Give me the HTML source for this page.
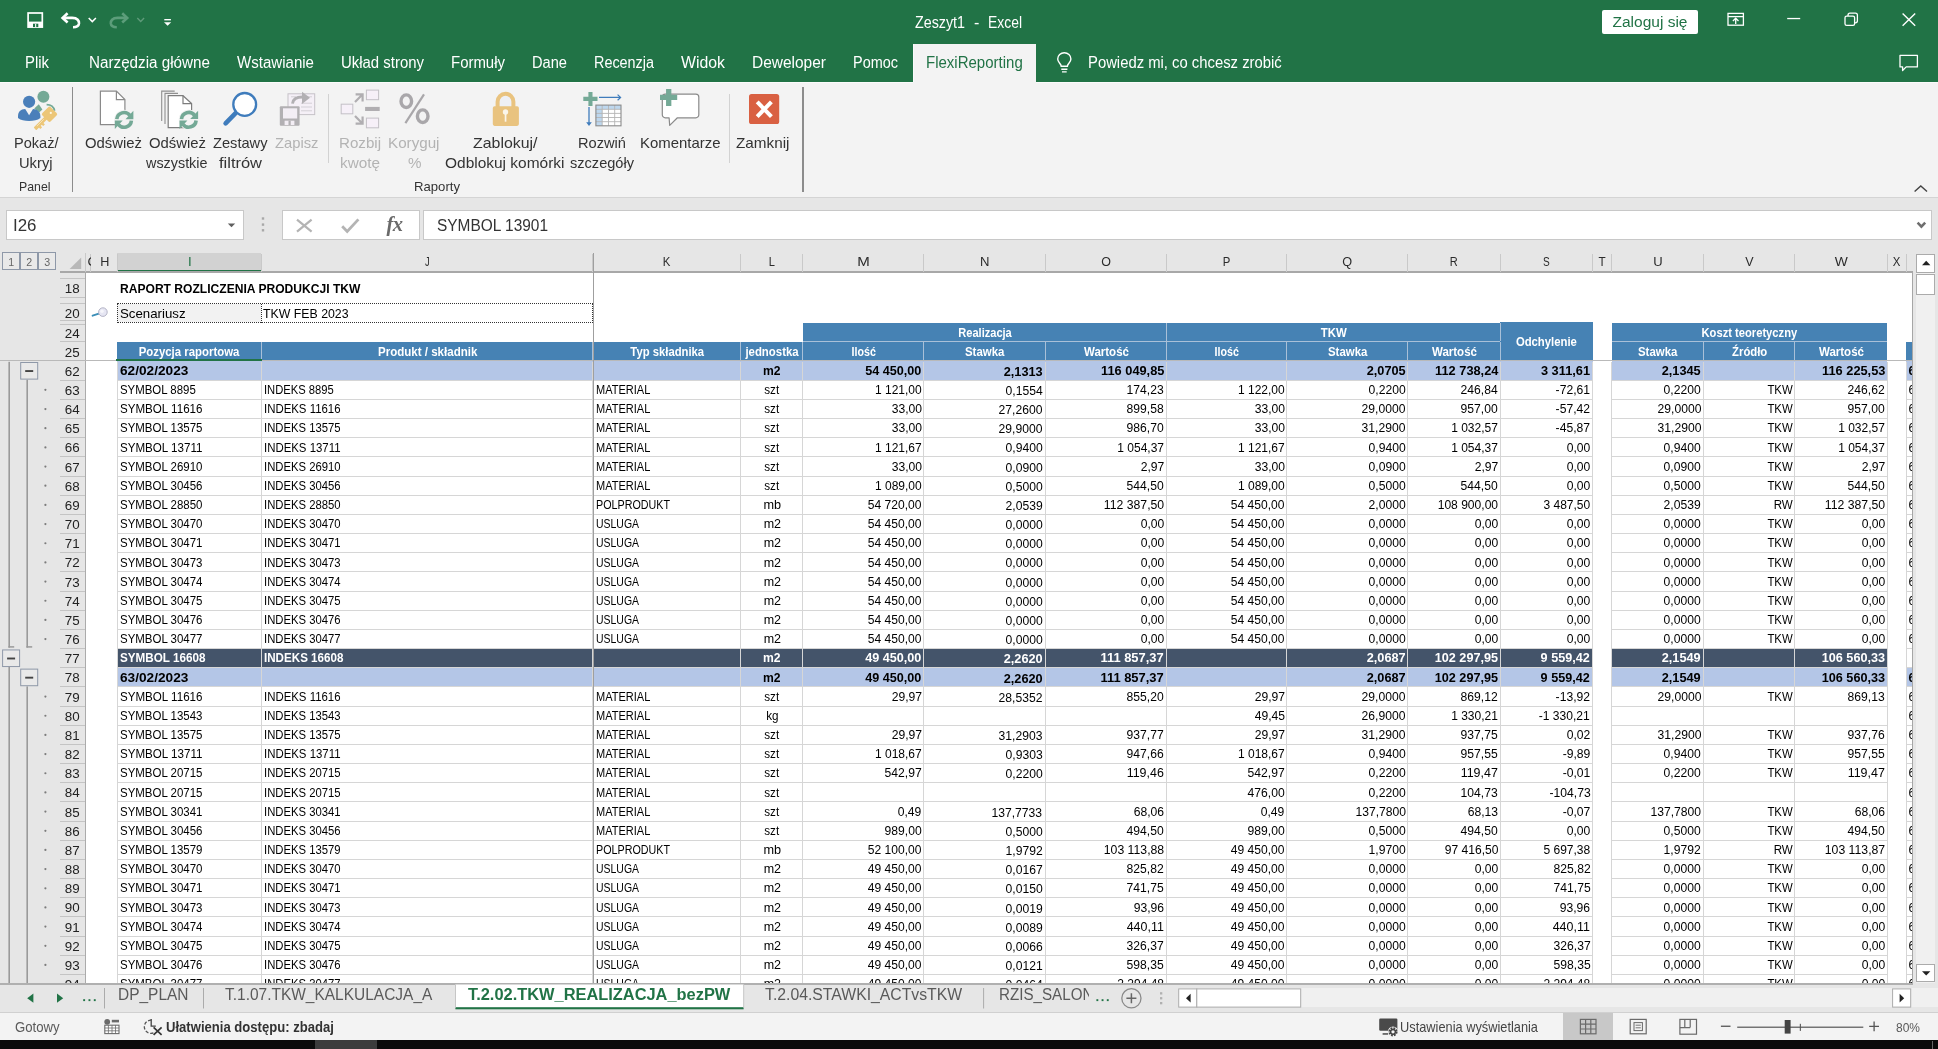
<!DOCTYPE html>
<html><head><meta charset="utf-8"><title>Zeszyt1 - Excel</title><style>
html,body{margin:0;padding:0}
body{width:1938px;height:1049px;position:relative;overflow:hidden;background:#e6e6e6;font-family:"Liberation Sans",sans-serif}
.b{position:absolute;display:block}
.t{position:absolute;white-space:nowrap;line-height:1;display:block}
.clip{position:absolute;overflow:hidden}
#root{position:absolute;left:0;top:0;width:1938px;height:1049px;will-change:transform}
</style></head><body><div id="root">
<div class="b" style="left:0px;top:0px;width:1938px;height:82px;background:#217346;"></div>
<div class="b" style="left:0px;top:82px;width:1938px;height:115px;background:#f3f3f3;"></div>
<div class="b" style="left:0px;top:196.5px;width:1938px;height:1px;background:#d4d4d4;"></div>
<div class="b" style="left:0px;top:197.5px;width:1938px;height:55px;background:#e6e6e6;"></div>
<svg class="b" style="left:0px;top:0px;" width="1938" height="81" viewBox="0 0 1938 81"><rect x="28.100" y="13" width="14.200" height="14.100" fill="none" stroke="#fff" stroke-width="1.700"/><rect x="28.100" y="21.600" width="14.200" height="5.500" fill="#fff"/><rect x="33" y="23.700" width="5.300" height="3.400" fill="#217346"/><rect x="35.100" y="23.900" width="1.100" height="3.200" fill="#fff"/><g fill="none" stroke="#fff" stroke-width="2.600"><path d="M67.600 13.300L62.600 17.900L67.600 22.500"/><path d="M63.200 17.900H72.200C77.600 17.900 79.200 21 79 23.400C78.700 26.200 76 27.300 73 27.300"/></g><path d="M88.700 18l3.600 3.600l3.600-3.600" fill="none" stroke="#fff" stroke-width="1.500"/><g fill="none" stroke="#5c9d7a" stroke-width="2.600"><path d="M122.200 13.300L127.200 17.900L122.200 22.500"/><path d="M126.600 17.900H117.600C112.200 17.900 110.600 21 110.800 23.400C111.100 26.200 113.800 27.300 116.800 27.300"/></g><path d="M137.300 18l3.400 3.400l3.400-3.400" fill="none" stroke="#5f9b7a" stroke-width="1.400"/><rect x="164.3" y="19" width="6.6" height="1.4" fill="#fff"/><path d="M164 22.2h7.2l-3.6 3.6z" fill="#fff"/><g fill="none" stroke="#fff" stroke-width="1.3"><rect x="1728" y="13.4" width="15.4" height="11.8"/><path d="M1728 16.6h15.4"/><path d="M1735.7 24v-5.6M1732.9 21l2.8-2.8l2.8 2.8"/></g><rect x="1787.2" y="17.9" width="13" height="1.3" fill="#fff"/><g fill="none" stroke="#fff" stroke-width="1.3"><rect x="1845" y="16.2" width="9.6" height="9.2" rx="1.6"/><path d="M1848 16v-0.8a2 2 0 0 1 2-2h5.4a2 2 0 0 1 2 2v5.6a2 2 0 0 1-2 2h-0.6"/></g><path d="M1902.6 13.4l12.6 12.4M1915.2 13.4l-12.6 12.4" stroke="#fff" stroke-width="1.4" fill="none"/><path d="M1900 55.3h17.4v11.6h-11.2l-3.6 3.6v-3.6h-2.6z" fill="none" stroke="#fff" stroke-width="1.3" stroke-linejoin="round"/><g fill="none" stroke="#fff" stroke-width="1.4"><path d="M1061.2 66.3c0-2.6-3.5-3.6-3.5-7.2a6.6 6.4 0 0 1 13.2 0c0 3.6-3.5 4.6-3.5 7.2z"/><path d="M1061.3 69.2h6.1M1062 71.9h4.7"/></g></svg>
<span class="t" style="left:915.4px;top:14.75px;font-size:16px;color:#fff;transform:scaleX(0.8926);transform-origin:0 50%;">Zeszyt1</span>
<span class="t" style="left:974px;top:14.75px;font-size:16px;color:#fff;">-</span>
<span class="t" style="left:988.4px;top:14.75px;font-size:16px;color:#fff;transform:scaleX(0.8690);transform-origin:0 50%;">Excel</span>
<div class="b" style="left:1602px;top:10px;width:96px;height:23.5px;background:#fff;border-radius:2px;"></div>
<span class="t" style="left:1612.5px;top:13.88px;font-size:15.5px;color:#217346;">Zaloguj się</span>
<span class="t" style="left:25px;top:54.69px;font-size:15.6px;color:#fff;transform:scaleX(0.9547);transform-origin:0 50%;">Plik</span>
<span class="t" style="left:89px;top:54.69px;font-size:15.6px;color:#fff;transform:scaleX(0.9758);transform-origin:0 50%;">Narzędzia główne</span>
<span class="t" style="left:237px;top:54.69px;font-size:15.6px;color:#fff;transform:scaleX(0.9654);transform-origin:0 50%;">Wstawianie</span>
<span class="t" style="left:341px;top:54.69px;font-size:15.6px;color:#fff;transform:scaleX(0.9573);transform-origin:0 50%;">Układ strony</span>
<span class="t" style="left:451px;top:54.69px;font-size:15.6px;color:#fff;transform:scaleX(0.9585);transform-origin:0 50%;">Formuły</span>
<span class="t" style="left:532px;top:54.69px;font-size:15.6px;color:#fff;transform:scaleX(0.9385);transform-origin:0 50%;">Dane</span>
<span class="t" style="left:594px;top:54.69px;font-size:15.6px;color:#fff;transform:scaleX(0.9225);transform-origin:0 50%;">Recenzja</span>
<span class="t" style="left:681px;top:54.69px;font-size:15.6px;color:#fff;transform:scaleX(1.0152);transform-origin:0 50%;">Widok</span>
<span class="t" style="left:752px;top:54.69px;font-size:15.6px;color:#fff;transform:scaleX(0.9923);transform-origin:0 50%;">Deweloper</span>
<span class="t" style="left:853px;top:54.69px;font-size:15.6px;color:#fff;transform:scaleX(0.9268);transform-origin:0 50%;">Pomoc</span>
<div class="b" style="left:0px;top:81.8px;width:1938px;height:1.1px;background:#fbfbfb;"></div>
<div class="b" style="left:913.4px;top:43.5px;width:122.4px;height:39.5px;background:#f3f3f3;"></div>
<div class="b" style="left:913.4px;top:43.5px;width:1px;height:38.5px;background:#fafafa;"></div>
<span class="t" style="left:925.6px;top:54.69px;font-size:15.6px;color:#217346;transform:scaleX(0.9624);transform-origin:0 50%;">FlexiReporting</span>
<span class="t" style="left:1088.2px;top:54.69px;font-size:15.6px;color:#fff;transform:scaleX(0.9512);transform-origin:0 50%;">Powiedz mi, co chcesz zrobić</span>
<svg class="b" style="left:0px;top:81px;" width="1938" height="116" viewBox="0 81 1938 116"><circle cx="43.4" cy="96.8" r="6" fill="#74a996"/><path d="M34.2 108.6l4.6-4.4 3.6 5.4-3 2.6z" fill="#74a996"/><path d="M46.6 104.6c4 0 7.2 2.4 8 6.2" fill="none" stroke="#74a996" stroke-width="1.8"/><circle cx="29.1" cy="101.8" r="6.1" fill="#4a7fba"/><path d="M18 116.5c0-4.6 2.6-7.4 7.2-7.4l3.9 6.2 3.9-6.2c4.6 0 7.4 2.8 7.4 7.4v1.6c-3 2.2-6.6 3-11.3 3s-8.300-0.800-11.100-3z" fill="#4a7fba"/><g fill="#ecc678" transform="translate(49.500 114.300) rotate(45)"><rect x="-5.900" y="-5.900" width="11.800" height="11.800" rx="1.800"/><rect x="-1.900" y="3" width="3.800" height="17.600" rx="0.800"/><rect x="1.500" y="10.400" width="2.400" height="2.400"/><rect x="1.500" y="14.400" width="2.400" height="2.400"/></g><circle cx="50.800" cy="112.900" r="1.100" fill="#fdf6e3"/><path d="M36.800 126.200l7-7" stroke="#f7e6bd" stroke-width="0.900"/><path d="M100.4 91.100h16l8.500 8.500v25h-24.500z" fill="#fff" stroke="#8a8a8a" stroke-width="1.2"/><path d="M116.400 91.100v8.500h8.500" fill="none" stroke="#8a8a8a" stroke-width="1.2"/><circle cx="124.100" cy="119.900" r="10.200" fill="#f3f3f3"/><g fill="none" stroke="#74a996" stroke-width="3.600"><path d="M116.80 119.20A7.30 7.30 0 0 1 129.85 115.41"/><path d="M131.40 120.60A7.30 7.30 0 0 1 118.35 124.39"/></g><path d="M133.40 110.80V119.20H125.50z" fill="#74a996"/><path d="M114.80 129.00V120.60H122.70z" fill="#74a996"/><path d="M161.700 121v-29.900h13" fill="none" stroke="#8f8f8f" stroke-width="1.1"/><path d="M165 124v-30.600h13" fill="none" stroke="#8f8f8f" stroke-width="1.1"/><path d="M168.200 95.700h14.800l8.600 7.900v24h-23.400z" fill="#fff" stroke="#7d7d7d" stroke-width="1.2"/><path d="M183 95.700v7.900h8.600" fill="none" stroke="#7d7d7d" stroke-width="1.2"/><circle cx="188.800" cy="119.800" r="10.200" fill="#f3f3f3"/><g fill="none" stroke="#74a996" stroke-width="3.600"><path d="M181.50 119.10A7.30 7.30 0 0 1 194.55 115.31"/><path d="M196.10 120.50A7.30 7.30 0 0 1 183.05 124.29"/></g><path d="M198.10 110.70V119.10H190.20z" fill="#74a996"/><path d="M179.50 128.90V120.50H187.40z" fill="#74a996"/><path d="M235.600 113.200L225.600 123.300" stroke="#3f7cbc" stroke-width="4.600" stroke-linecap="round"/><circle cx="244.700" cy="104.400" r="11.400" fill="#fff" stroke="#3f7cbc" stroke-width="2.300"/><rect x="288" y="93.800" width="26.700" height="20.800" fill="#f5f0f7" stroke="#c6c2c8" stroke-width="1"/><path d="M301 103.200h11M301 107h11M301 110.800h11M291 96.800h5M307 96.800h5" stroke="#d0ccd2" stroke-width="0.9"/><path d="M292.500 103.600c0.500-5 4-6.600 10-6.600" fill="none" stroke="#b2b0b3" stroke-width="2.800"/><path d="M302 91.700l8 6.100-8 6.300z" fill="#b2b0b3"/><rect x="279.800" y="106.300" width="19.800" height="19.500" rx="1" fill="#b2b0b3"/><rect x="283" y="108.300" width="14.200" height="10.200" fill="#f3eef5"/><rect x="284.600" y="120.700" width="9.800" height="4.300" fill="#f3eef5"/><rect x="288.500" y="120.700" width="2.200" height="4.300" fill="#b2b0b3"/><rect x="341.200" y="104.200" width="11.600" height="9.600" fill="#f6f0f8" stroke="#c4c0c6" stroke-width="1"/><rect x="366.400" y="90.100" width="12.200" height="9.600" fill="#f6f0f8" stroke="#c4c0c6" stroke-width="1"/><rect x="366.400" y="118.100" width="12.200" height="9.700" fill="#f6f0f8" stroke="#c4c0c6" stroke-width="1"/><rect x="365.100" y="106.900" width="14.600" height="4.100" fill="#b0aeb1"/><g stroke="#b0aeb1" stroke-width="2.200" fill="none"><path d="M355 102l7.200-7.200M355.600 94.400h7v7"/><path d="M355 116l7.200 7.200M355.600 123.600h7v-7"/></g><g fill="none" stroke="#a9a7aa"><ellipse cx="406.300" cy="101.200" rx="5.300" ry="6.300" stroke-width="3.400"/><ellipse cx="422.700" cy="116.200" rx="5.300" ry="6.300" stroke-width="3.400"/><path d="M405.400 123.200l18.600-28.800" stroke-width="2.200"/></g><path d="M497.600 108v-6.300a7.900 7.900 0 0 1 15.800 0v6.300" fill="#eef0f5" stroke="#e9c37f" stroke-width="4"/><rect x="492.800" y="106.200" width="26.100" height="19.700" rx="1.800" fill="#e9c37f"/><circle cx="505.500" cy="112" r="2.700" fill="#fbf6ea"/><rect x="504.700" y="112" width="1.700" height="9.700" fill="#fbf6ea"/><rect x="595.900" y="105.100" width="25.100" height="20.700" fill="#fff"/><rect x="595.900" y="105.100" width="25.100" height="4.200" fill="#bdd7ee"/><rect x="595.900" y="105.100" width="6.300" height="20.700" fill="#bdd7ee"/><path d="M595.900 109.300h25.100M595.900 113.400h25.100M595.900 117.500h25.100M595.900 121.700h25.100M602.200 105.100v20.700M608.500 105.100v20.700M614.700 105.100v20.700" stroke="#b4b4b4" stroke-width="0.9" fill="none"/><rect x="595.900" y="105.100" width="25.100" height="20.700" fill="none" stroke="#8a8a8a" stroke-width="1.100"/><path d="M583.300 98.850h14.200M590.450 92.100v13.900" stroke="#74a996" stroke-width="4.100" fill="none"/><path d="M599 97.400h21M617.600 94.600l3 2.800-3 2.800" stroke="#3f7cbc" stroke-width="1.200" fill="none"/><path d="M589 107.100v16" stroke="#3f7cbc" stroke-width="1.300" fill="none"/><path d="M586.200 122.200h5.600l-2.800 3.800z" fill="#3f7cbc"/><path d="M665.300 94.100h30.500a3 3 0 0 1 3 3v17.700a3 3 0 0 1-3 3h-18.400l-7.700 7.600-0.600-7.600h-3.800a3 3 0 0 1-3-3v-17.700a3 3 0 0 1 3-3z" fill="#fff" stroke="#8a8a8a" stroke-width="1.200" stroke-linejoin="round"/><path d="M660 97.450h17.200M668.700 89v17" stroke="#74a996" stroke-width="5.300" fill="none"/><rect x="749" y="94.100" width="30.200" height="29.900" rx="2.600" fill="#d96042"/><path d="M757.200 101.800l14.200 14.800M771.400 101.800l-14.200 14.800" stroke="#fff" stroke-width="4" fill="none"/><path d="M1914.600 191.600l6.200-5.700 6.200 5.700" fill="none" stroke="#444" stroke-width="1.400"/></svg>
<span class="t" style="left:14px;top:134.9px;font-size:15px;color:#333;transform:scaleX(0.9704);transform-origin:0 50%;">Pokaż/</span>
<span class="t" style="left:19px;top:155.3px;font-size:15px;color:#333;transform:scaleX(0.9806);transform-origin:0 50%;">Ukryj</span>
<span class="t" style="left:84.5px;top:134.9px;font-size:15px;color:#333;transform:scaleX(0.9910);transform-origin:0 50%;">Odśwież</span>
<span class="t" style="left:149px;top:134.9px;font-size:15px;color:#333;transform:scaleX(0.9910);transform-origin:0 50%;">Odśwież</span>
<span class="t" style="left:146px;top:155.3px;font-size:15px;color:#333;transform:scaleX(0.9583);transform-origin:0 50%;">wszystkie</span>
<span class="t" style="left:213px;top:134.9px;font-size:15px;color:#333;transform:scaleX(0.9759);transform-origin:0 50%;">Zestawy</span>
<span class="t" style="left:219px;top:155.3px;font-size:15px;color:#333;transform:scaleX(1.0977);transform-origin:0 50%;">filtrów</span>
<span class="t" style="left:274.5px;top:134.9px;font-size:15px;color:#b3b3b3;transform:scaleX(0.9846);transform-origin:0 50%;">Zapisz</span>
<span class="t" style="left:339px;top:134.9px;font-size:15px;color:#b3b3b3;transform:scaleX(1.0076);transform-origin:0 50%;">Rozbij</span>
<span class="t" style="left:340px;top:155.3px;font-size:15px;color:#b3b3b3;transform:scaleX(1.0208);transform-origin:0 50%;">kwotę</span>
<span class="t" style="left:388px;top:134.9px;font-size:15px;color:#b3b3b3;transform:scaleX(1.0125);transform-origin:0 50%;">Koryguj</span>
<span class="t" style="left:407.5px;top:155.3px;font-size:15px;color:#b3b3b3;transform:scaleX(1.0122);transform-origin:0 50%;">%</span>
<span class="t" style="left:473px;top:134.9px;font-size:15px;color:#333;transform:scaleX(1.0597);transform-origin:0 50%;">Zablokuj/</span>
<span class="t" style="left:444.5px;top:155.3px;font-size:15px;color:#333;transform:scaleX(1.0312);transform-origin:0 50%;">Odblokuj komórki</span>
<span class="t" style="left:578px;top:134.9px;font-size:15px;color:#333;transform:scaleX(0.9759);transform-origin:0 50%;">Rozwiń</span>
<span class="t" style="left:570px;top:155.3px;font-size:15px;color:#333;transform:scaleX(0.9718);transform-origin:0 50%;">szczegóły</span>
<span class="t" style="left:639.5px;top:134.9px;font-size:15px;color:#333;transform:scaleX(0.9953);transform-origin:0 50%;">Komentarze</span>
<span class="t" style="left:736px;top:134.9px;font-size:15px;color:#333;transform:scaleX(1.0189);transform-origin:0 50%;">Zamknij</span>
<span class="t" style="left:19px;top:180.07px;font-size:13.5px;color:#333;transform:scaleX(0.9123);transform-origin:0 50%;">Panel</span>
<span class="t" style="left:413.5px;top:180.07px;font-size:13.5px;color:#333;transform:scaleX(0.9731);transform-origin:0 50%;">Raporty</span>
<div class="b" style="left:71.6px;top:87px;width:1.5px;height:104.5px;background:#8c8c8c;"></div>
<div class="b" style="left:802.3px;top:87px;width:1.5px;height:104.5px;background:#8c8c8c;"></div>
<div class="b" style="left:327.9px;top:94px;width:1px;height:69px;background:#d2d2d2;"></div>
<div class="b" style="left:728.8px;top:94px;width:1px;height:69px;background:#d2d2d2;"></div>
<div class="b" style="left:6px;top:210px;width:237.8px;height:30px;background:#fff;border:1px solid #c8c8c8;box-sizing:border-box;"></div>
<span class="t" style="left:13px;top:218.05px;font-size:16px;color:#333;transform:scaleX(1.0565);transform-origin:0 50%;">I26</span>
<div class="b" style="left:281.5px;top:210px;width:138.5px;height:30px;background:#fff;border:1px solid #c8c8c8;box-sizing:border-box;"></div>
<div class="b" style="left:423px;top:210px;width:1509px;height:30px;background:#fff;border:1px solid #c8c8c8;box-sizing:border-box;"></div>
<span class="t" style="left:437.2px;top:218.05px;font-size:16px;color:#333;transform:scaleX(0.9649);transform-origin:0 50%;">SYMBOL 13901</span>
<svg class="b" style="left:0px;top:197px;" width="1938" height="55" viewBox="0 197 1938 55"><path d="M227.800 223.400h7.400l-3.700 3.900z" fill="#606060"/><rect x="261.800" y="217.3" width="2.400" height="2.400" fill="#a8a8a8"/><rect x="261.800" y="223.4" width="2.400" height="2.400" fill="#a8a8a8"/><rect x="261.800" y="229.1" width="2.400" height="2.400" fill="#a8a8a8"/><path d="M297 219.700l14.600 12M311.600 219.700l-14.600 12" stroke="#b4b4b4" stroke-width="2.200" fill="none"/><path d="M342.200 226.200l5 5.200 11.200-12" stroke="#b4b4b4" stroke-width="2.800" fill="none"/><path d="M1917.600 222.700l3.800 3.900 3.800-3.900" fill="none" stroke="#6e6e6e" stroke-width="2.600"/></svg><span class="t" style="left:386.500px;top:213.500px;font-size:20.500px;font-family:'Liberation Serif',serif;font-style:italic;font-weight:700;color:#6a6a6a;letter-spacing:-0.500px">fx</span>
<div class="b" style="left:1916.2px;top:254.3px;width:18.7px;height:729px;background:#f0f0f0;"></div>
<div class="b" style="left:85.9px;top:272.3px;width:1826.6px;height:711.3px;background:#fff;"></div>
<div class="b" style="left:117.4px;top:252.5px;width:144px;height:19.5px;background:#d2d2d2;"></div>
<div class="b" style="left:117.4px;top:270.4px;width:144px;height:1.9px;background:#217346;"></div>
<div class="b" style="left:60px;top:271.4px;width:1852.5px;height:1.2px;background:#a8a8a8;"></div>
<div class="b" style="left:90.4px;top:253.5px;width:1px;height:18px;background:#c9c9c9;"></div>
<span class="t" style="left:99.51px;top:255.25px;font-size:13.4px;color:#2b2b2b;transform:scaleX(0.9445);transform-origin:50% 50%;">H</span>
<div class="b" style="left:116.5px;top:253.5px;width:1px;height:18px;background:#c9c9c9;"></div>
<span class="t" style="left:187.54px;top:255.25px;font-size:13.4px;color:#217346;transform:scaleX(0.9929);transform-origin:50% 50%;">I</span>
<div class="b" style="left:260.5px;top:253.5px;width:1px;height:18px;background:#c9c9c9;"></div>
<span class="t" style="left:423.95px;top:255.25px;font-size:13.4px;color:#2b2b2b;transform:scaleX(0.6981);transform-origin:50% 50%;">J</span>
<div class="b" style="left:592.3px;top:253.5px;width:1px;height:18px;background:#c9c9c9;"></div>
<span class="t" style="left:662.38px;top:255.25px;font-size:13.4px;color:#2b2b2b;transform:scaleX(0.8527);transform-origin:50% 50%;">K</span>
<div class="b" style="left:739.6px;top:253.5px;width:1px;height:18px;background:#c9c9c9;"></div>
<span class="t" style="left:767.92px;top:255.25px;font-size:13.4px;color:#2b2b2b;transform:scaleX(0.8275);transform-origin:50% 50%;">L</span>
<div class="b" style="left:801.9px;top:253.5px;width:1px;height:18px;background:#c9c9c9;"></div>
<span class="t" style="left:857.92px;top:255.25px;font-size:13.4px;color:#2b2b2b;transform:scaleX(1.1236);transform-origin:50% 50%;">M</span>
<div class="b" style="left:923.3px;top:253.5px;width:1px;height:18px;background:#c9c9c9;"></div>
<span class="t" style="left:979.96px;top:255.25px;font-size:13.4px;color:#2b2b2b;transform:scaleX(0.9785);transform-origin:50% 50%;">N</span>
<div class="b" style="left:1044.5px;top:253.5px;width:1px;height:18px;background:#c9c9c9;"></div>
<span class="t" style="left:1100.74px;top:255.25px;font-size:13.4px;color:#2b2b2b;transform:scaleX(0.9319);transform-origin:50% 50%;">O</span>
<div class="b" style="left:1165.6px;top:253.5px;width:1px;height:18px;background:#c9c9c9;"></div>
<span class="t" style="left:1222.38px;top:255.25px;font-size:13.4px;color:#2b2b2b;transform:scaleX(0.8479);transform-origin:50% 50%;">P</span>
<div class="b" style="left:1286.3px;top:253.5px;width:1px;height:18px;background:#c9c9c9;"></div>
<span class="t" style="left:1342.49px;top:255.25px;font-size:13.4px;color:#2b2b2b;transform:scaleX(0.9470);transform-origin:50% 50%;">Q</span>
<div class="b" style="left:1407.3px;top:253.5px;width:1px;height:18px;background:#c9c9c9;"></div>
<span class="t" style="left:1449.46px;top:255.25px;font-size:13.4px;color:#2b2b2b;transform:scaleX(0.8231);transform-origin:50% 50%;">R</span>
<div class="b" style="left:1499.5px;top:253.5px;width:1px;height:18px;background:#c9c9c9;"></div>
<span class="t" style="left:1542.08px;top:255.25px;font-size:13.4px;color:#2b2b2b;transform:scaleX(0.7541);transform-origin:50% 50%;">S</span>
<div class="b" style="left:1591.8px;top:253.5px;width:1px;height:18px;background:#c9c9c9;"></div>
<span class="t" style="left:1598.21px;top:255.25px;font-size:13.4px;color:#2b2b2b;transform:scaleX(0.8733);transform-origin:50% 50%;">T</span>
<div class="b" style="left:1611px;top:253.5px;width:1px;height:18px;background:#c9c9c9;"></div>
<span class="t" style="left:1652.86px;top:255.25px;font-size:13.4px;color:#2b2b2b;transform:scaleX(0.9726);transform-origin:50% 50%;">U</span>
<div class="b" style="left:1702.6px;top:253.5px;width:1px;height:18px;background:#c9c9c9;"></div>
<span class="t" style="left:1744.93px;top:255.25px;font-size:13.4px;color:#2b2b2b;transform:scaleX(0.9312);transform-origin:50% 50%;">V</span>
<div class="b" style="left:1794.4px;top:253.5px;width:1px;height:18px;background:#c9c9c9;"></div>
<span class="t" style="left:1835.03px;top:255.25px;font-size:13.4px;color:#2b2b2b;transform:scaleX(1.0319);transform-origin:50% 50%;">W</span>
<div class="b" style="left:1886.5px;top:253.5px;width:1px;height:18px;background:#c9c9c9;"></div>
<span class="t" style="left:1892.43px;top:255.25px;font-size:13.4px;color:#2b2b2b;transform:scaleX(0.8519);transform-origin:50% 50%;">X</span>
<div class="b" style="left:1905.5px;top:253.5px;width:1px;height:18px;background:#c9c9c9;"></div>
<div class="clip" style="left:86.5px;top:253px;width:4.6px;height:18px"><span class="t" style="left:1px;top:2.25px;font-size:13.4px;color:#2b2b2b;">G</span></div>
<div class="b" style="left:85.3px;top:252.5px;width:1px;height:20px;background:#c9c9c9;"></div>
<svg class="b" style="left:64px;top:255px;" width="20" height="16" viewBox="0 0 20 16"><path d="M17.200 2.400v11.600h-11.600z" fill="#b8b8b8"/></svg>
<div class="b" style="left:2.4px;top:252.2px;width:18px;height:18.2px;background:#e9e9e9;border:1px solid #8e98a8;box-sizing:border-box;"></div>
<span class="t" style="left:8.17px;top:255.78px;font-size:11.6px;color:#666;transform:scaleX(0.9200);transform-origin:50% 50%;">1</span>
<div class="b" style="left:20.4px;top:252.2px;width:18px;height:18.2px;background:#e9e9e9;border:1px solid #8e98a8;box-sizing:border-box;"></div>
<span class="t" style="left:26.17px;top:255.78px;font-size:11.6px;color:#666;transform:scaleX(0.9200);transform-origin:50% 50%;">2</span>
<div class="b" style="left:38.4px;top:252.2px;width:18px;height:18.2px;background:#e9e9e9;border:1px solid #8e98a8;box-sizing:border-box;"></div>
<span class="t" style="left:44.17px;top:255.78px;font-size:11.6px;color:#666;transform:scaleX(0.9200);transform-origin:50% 50%;">3</span>
<div class="b" style="left:85px;top:272px;width:1.2px;height:711.6px;background:#ababab;"></div>
<div class="b" style="left:60px;top:277.8px;width:25px;height:1px;background:#c4c4c4;"></div>
<div class="b" style="left:60px;top:296.8px;width:25px;height:1px;background:#c4c4c4;"></div>
<div class="b" style="left:60px;top:303px;width:25px;height:1px;background:#c4c4c4;"></div>
<div class="b" style="left:60px;top:320.1px;width:25px;height:1px;background:#c4c4c4;"></div>
<div class="b" style="left:60px;top:323.9px;width:25px;height:1px;background:#c4c4c4;"></div>
<div class="b" style="left:60px;top:341px;width:25px;height:1px;background:#c4c4c4;"></div>
<div class="b" style="left:60px;top:379.67px;width:25px;height:1px;background:#c4c4c4;"></div>
<div class="b" style="left:60px;top:398.84px;width:25px;height:1px;background:#c4c4c4;"></div>
<div class="b" style="left:60px;top:418.01px;width:25px;height:1px;background:#c4c4c4;"></div>
<div class="b" style="left:60px;top:437.18px;width:25px;height:1px;background:#c4c4c4;"></div>
<div class="b" style="left:60px;top:456.35px;width:25px;height:1px;background:#c4c4c4;"></div>
<div class="b" style="left:60px;top:475.52px;width:25px;height:1px;background:#c4c4c4;"></div>
<div class="b" style="left:60px;top:494.69px;width:25px;height:1px;background:#c4c4c4;"></div>
<div class="b" style="left:60px;top:513.86px;width:25px;height:1px;background:#c4c4c4;"></div>
<div class="b" style="left:60px;top:533.03px;width:25px;height:1px;background:#c4c4c4;"></div>
<div class="b" style="left:60px;top:552.2px;width:25px;height:1px;background:#c4c4c4;"></div>
<div class="b" style="left:60px;top:571.37px;width:25px;height:1px;background:#c4c4c4;"></div>
<div class="b" style="left:60px;top:590.54px;width:25px;height:1px;background:#c4c4c4;"></div>
<div class="b" style="left:60px;top:609.71px;width:25px;height:1px;background:#c4c4c4;"></div>
<div class="b" style="left:60px;top:628.88px;width:25px;height:1px;background:#c4c4c4;"></div>
<div class="b" style="left:60px;top:648.05px;width:25px;height:1px;background:#c4c4c4;"></div>
<div class="b" style="left:60px;top:667.22px;width:25px;height:1px;background:#c4c4c4;"></div>
<div class="b" style="left:60px;top:686.39px;width:25px;height:1px;background:#c4c4c4;"></div>
<div class="b" style="left:60px;top:705.56px;width:25px;height:1px;background:#c4c4c4;"></div>
<div class="b" style="left:60px;top:724.73px;width:25px;height:1px;background:#c4c4c4;"></div>
<div class="b" style="left:60px;top:743.9px;width:25px;height:1px;background:#c4c4c4;"></div>
<div class="b" style="left:60px;top:763.07px;width:25px;height:1px;background:#c4c4c4;"></div>
<div class="b" style="left:60px;top:782.24px;width:25px;height:1px;background:#c4c4c4;"></div>
<div class="b" style="left:60px;top:801.41px;width:25px;height:1px;background:#c4c4c4;"></div>
<div class="b" style="left:60px;top:820.58px;width:25px;height:1px;background:#c4c4c4;"></div>
<div class="b" style="left:60px;top:839.75px;width:25px;height:1px;background:#c4c4c4;"></div>
<div class="b" style="left:60px;top:858.92px;width:25px;height:1px;background:#c4c4c4;"></div>
<div class="b" style="left:60px;top:878.09px;width:25px;height:1px;background:#c4c4c4;"></div>
<div class="b" style="left:60px;top:897.26px;width:25px;height:1px;background:#c4c4c4;"></div>
<div class="b" style="left:60px;top:916.43px;width:25px;height:1px;background:#c4c4c4;"></div>
<div class="b" style="left:60px;top:935.6px;width:25px;height:1px;background:#c4c4c4;"></div>
<div class="b" style="left:60px;top:954.77px;width:25px;height:1px;background:#c4c4c4;"></div>
<div class="b" style="left:60px;top:973.94px;width:25px;height:1px;background:#c4c4c4;"></div>
<span class="t" style="left:64.69px;top:281.85px;font-size:13.4px;color:#222;">18</span>
<span class="t" style="left:64.69px;top:306.85px;font-size:13.4px;color:#222;">20</span>
<span class="t" style="left:64.69px;top:326.65px;font-size:13.4px;color:#222;">24</span>
<span class="t" style="left:64.69px;top:345.65px;font-size:13.4px;color:#222;">25</span>
<span class="t" style="left:64.69px;top:364.65px;font-size:13.4px;color:#222;">62</span>
<span class="t" style="left:64.69px;top:383.82px;font-size:13.4px;color:#222;">63</span>
<span class="t" style="left:64.69px;top:402.99px;font-size:13.4px;color:#222;">64</span>
<span class="t" style="left:64.69px;top:422.16px;font-size:13.4px;color:#222;">65</span>
<span class="t" style="left:64.69px;top:441.33px;font-size:13.4px;color:#222;">66</span>
<span class="t" style="left:64.69px;top:460.5px;font-size:13.4px;color:#222;">67</span>
<span class="t" style="left:64.69px;top:479.67px;font-size:13.4px;color:#222;">68</span>
<span class="t" style="left:64.69px;top:498.84px;font-size:13.4px;color:#222;">69</span>
<span class="t" style="left:64.69px;top:518.01px;font-size:13.4px;color:#222;">70</span>
<span class="t" style="left:64.69px;top:537.18px;font-size:13.4px;color:#222;">71</span>
<span class="t" style="left:64.69px;top:556.35px;font-size:13.4px;color:#222;">72</span>
<span class="t" style="left:64.69px;top:575.52px;font-size:13.4px;color:#222;">73</span>
<span class="t" style="left:64.69px;top:594.69px;font-size:13.4px;color:#222;">74</span>
<span class="t" style="left:64.69px;top:613.86px;font-size:13.4px;color:#222;">75</span>
<span class="t" style="left:64.69px;top:633.03px;font-size:13.4px;color:#222;">76</span>
<span class="t" style="left:64.69px;top:652.2px;font-size:13.4px;color:#222;">77</span>
<span class="t" style="left:64.69px;top:671.37px;font-size:13.4px;color:#222;">78</span>
<span class="t" style="left:64.69px;top:690.54px;font-size:13.4px;color:#222;">79</span>
<span class="t" style="left:64.69px;top:709.71px;font-size:13.4px;color:#222;">80</span>
<span class="t" style="left:64.69px;top:728.88px;font-size:13.4px;color:#222;">81</span>
<span class="t" style="left:64.69px;top:748.05px;font-size:13.4px;color:#222;">82</span>
<span class="t" style="left:64.69px;top:767.22px;font-size:13.4px;color:#222;">83</span>
<span class="t" style="left:64.69px;top:786.39px;font-size:13.4px;color:#222;">84</span>
<span class="t" style="left:64.69px;top:805.56px;font-size:13.4px;color:#222;">85</span>
<span class="t" style="left:64.69px;top:824.73px;font-size:13.4px;color:#222;">86</span>
<span class="t" style="left:64.69px;top:843.9px;font-size:13.4px;color:#222;">87</span>
<span class="t" style="left:64.69px;top:863.07px;font-size:13.4px;color:#222;">88</span>
<span class="t" style="left:64.69px;top:882.24px;font-size:13.4px;color:#222;">89</span>
<span class="t" style="left:64.69px;top:901.41px;font-size:13.4px;color:#222;">90</span>
<span class="t" style="left:64.69px;top:920.58px;font-size:13.4px;color:#222;">91</span>
<span class="t" style="left:64.69px;top:939.75px;font-size:13.4px;color:#222;">92</span>
<span class="t" style="left:64.69px;top:958.92px;font-size:13.4px;color:#222;">93</span>
<div class="clip" style="left:60px;top:297.8px;width:25px;height:2.2px"><span class="t" style="left:4.69px;top:-17.35px;font-size:13.4px;color:#222;">19</span></div>
<div class="clip" style="left:60px;top:975.44px;width:25px;height:7.66px"><span class="t" style="left:4.69px;top:2.25px;font-size:13.4px;color:#222;">94</span></div>
<svg class="b" style="left:0px;top:361px;" width="60" height="622.6" viewBox="0 361 60 622.6"><rect x="8.4" y="361.8" width="1.600" height="285.85" fill="#9a9a9a"/><rect x="8.4" y="646.15" width="5.800" height="1.500" fill="#9a9a9a"/><rect x="26.4" y="379.67" width="1.600" height="267.98" fill="#9a9a9a"/><rect x="26.4" y="646.15" width="5.800" height="1.500" fill="#9a9a9a"/><rect x="8.4" y="666.52" width="1.600" height="317.08" fill="#9a9a9a"/><rect x="26.4" y="686.39" width="1.600" height="297.21" fill="#9a9a9a"/><rect x="20.7" y="362.5" width="17" height="16.600" fill="#e9e9e9" stroke="#8e98a8" stroke-width="1"/><rect x="25.2" y="370.1" width="8" height="1.900" fill="#444"/><rect x="2.6" y="649.95" width="17" height="16.600" fill="#e9e9e9" stroke="#8e98a8" stroke-width="1"/><rect x="7.1" y="657.55" width="8" height="1.900" fill="#444"/><rect x="20.7" y="669.12" width="17" height="16.600" fill="#e9e9e9" stroke="#8e98a8" stroke-width="1"/><rect x="25.2" y="676.72" width="8" height="1.900" fill="#444"/><circle cx="45.400" cy="389.87" r="1.100" fill="#7c7c7c"/><circle cx="45.400" cy="409.04" r="1.100" fill="#7c7c7c"/><circle cx="45.400" cy="428.21" r="1.100" fill="#7c7c7c"/><circle cx="45.400" cy="447.38" r="1.100" fill="#7c7c7c"/><circle cx="45.400" cy="466.55" r="1.100" fill="#7c7c7c"/><circle cx="45.400" cy="485.72" r="1.100" fill="#7c7c7c"/><circle cx="45.400" cy="504.89" r="1.100" fill="#7c7c7c"/><circle cx="45.400" cy="524.06" r="1.100" fill="#7c7c7c"/><circle cx="45.400" cy="543.23" r="1.100" fill="#7c7c7c"/><circle cx="45.400" cy="562.4" r="1.100" fill="#7c7c7c"/><circle cx="45.400" cy="581.57" r="1.100" fill="#7c7c7c"/><circle cx="45.400" cy="600.74" r="1.100" fill="#7c7c7c"/><circle cx="45.400" cy="619.91" r="1.100" fill="#7c7c7c"/><circle cx="45.400" cy="639.08" r="1.100" fill="#7c7c7c"/><circle cx="45.400" cy="696.59" r="1.100" fill="#7c7c7c"/><circle cx="45.400" cy="715.76" r="1.100" fill="#7c7c7c"/><circle cx="45.400" cy="734.93" r="1.100" fill="#7c7c7c"/><circle cx="45.400" cy="754.1" r="1.100" fill="#7c7c7c"/><circle cx="45.400" cy="773.27" r="1.100" fill="#7c7c7c"/><circle cx="45.400" cy="792.44" r="1.100" fill="#7c7c7c"/><circle cx="45.400" cy="811.61" r="1.100" fill="#7c7c7c"/><circle cx="45.400" cy="830.78" r="1.100" fill="#7c7c7c"/><circle cx="45.400" cy="849.95" r="1.100" fill="#7c7c7c"/><circle cx="45.400" cy="869.12" r="1.100" fill="#7c7c7c"/><circle cx="45.400" cy="888.29" r="1.100" fill="#7c7c7c"/><circle cx="45.400" cy="907.46" r="1.100" fill="#7c7c7c"/><circle cx="45.400" cy="926.63" r="1.100" fill="#7c7c7c"/><circle cx="45.400" cy="945.8" r="1.100" fill="#7c7c7c"/><circle cx="45.400" cy="964.97" r="1.100" fill="#7c7c7c"/></svg>
<span class="t" style="left:120px;top:281.68px;font-size:13.6px;color:#000;font-weight:700;transform:scaleX(0.8883);transform-origin:0 50%;">RAPORT ROZLICZENIA PRODUKCJI TKW</span>
<div class="b" style="left:117.4px;top:303.5px;width:144px;height:18.8px;background:#f2f2f2;"></div>
<div class="b" style="left:117px;top:303px;width:476.2px;height:19.8px;border:1px dotted #333;box-sizing:border-box;"></div>
<div class="b" style="left:261px;top:303.5px;width:1px;height:19px;border-left:1px dotted #333;"></div>
<span class="t" style="left:120px;top:306.68px;font-size:13.6px;color:#000;transform:scaleX(0.9751);transform-origin:0 50%;">Scenariusz</span>
<span class="t" style="left:262.9px;top:306.68px;font-size:13.6px;color:#000;transform:scaleX(0.9060);transform-origin:0 50%;">TKW FEB 2023</span>
<svg class="b" style="left:90px;top:305px;" width="20" height="14" viewBox="0 0 20 14"><path d="M2.600 10.700l7-2.300" stroke="#3b8fb8" stroke-width="1.900" stroke-linecap="round"/><circle cx="12.900" cy="7.100" r="4.300" fill="#e6e6f3" stroke="#b4b4c6" stroke-width="1"/><circle cx="12" cy="6.200" r="1.800" fill="#f6f6fb"/></svg>
<div class="b" style="left:117.4px;top:342.2px;width:144px;height:18px;background:#4682b4;"></div>
<div class="b" style="left:261.4px;top:342.2px;width:331.8px;height:18px;background:#4682b4;"></div>
<div class="b" style="left:593.2px;top:342.2px;width:147.3px;height:18px;background:#4682b4;"></div>
<div class="b" style="left:740.5px;top:342.2px;width:62.3px;height:18px;background:#4682b4;"></div>
<div class="b" style="left:802.8px;top:342.2px;width:121.4px;height:18px;background:#4682b4;"></div>
<div class="b" style="left:924.2px;top:342.2px;width:121.2px;height:18px;background:#4682b4;"></div>
<div class="b" style="left:1045.4px;top:342.2px;width:121.1px;height:18px;background:#4682b4;"></div>
<div class="b" style="left:1166.5px;top:342.2px;width:120.7px;height:18px;background:#4682b4;"></div>
<div class="b" style="left:1287.2px;top:342.2px;width:121px;height:18px;background:#4682b4;"></div>
<div class="b" style="left:1408.2px;top:342.2px;width:92.2px;height:18px;background:#4682b4;"></div>
<div class="b" style="left:1611.9px;top:342.2px;width:91.6px;height:18px;background:#4682b4;"></div>
<div class="b" style="left:1703.5px;top:342.2px;width:91.8px;height:18px;background:#4682b4;"></div>
<div class="b" style="left:1795.3px;top:342.2px;width:92.1px;height:18px;background:#4682b4;"></div>
<div class="b" style="left:802.8px;top:322.9px;width:363.7px;height:18.4px;background:#4682b4;"></div>
<div class="b" style="left:1166.5px;top:322.9px;width:333.9px;height:18.4px;background:#4682b4;"></div>
<div class="b" style="left:1500.4px;top:321.9px;width:92.3px;height:38.3px;background:#4682b4;"></div>
<div class="b" style="left:1611.9px;top:322.9px;width:275.5px;height:18.4px;background:#4682b4;"></div>
<div class="b" style="left:1906.4px;top:342.2px;width:6px;height:18px;background:#4682b4;"></div>
<div class="b" style="left:260.5px;top:342.2px;width:1px;height:18px;background:#a9c0d8;"></div>
<div class="b" style="left:592.3px;top:342.2px;width:1px;height:18px;background:#a9c0d8;"></div>
<div class="b" style="left:739.6px;top:342.2px;width:1px;height:18px;background:#a9c0d8;"></div>
<div class="b" style="left:801.9px;top:342.2px;width:1px;height:18px;background:#a9c0d8;"></div>
<div class="b" style="left:923.3px;top:342.2px;width:1px;height:18px;background:#a9c0d8;"></div>
<div class="b" style="left:1044.5px;top:342.2px;width:1px;height:18px;background:#a9c0d8;"></div>
<div class="b" style="left:1165.6px;top:342.2px;width:1px;height:18px;background:#a9c0d8;"></div>
<div class="b" style="left:1286.3px;top:342.2px;width:1px;height:18px;background:#a9c0d8;"></div>
<div class="b" style="left:1407.3px;top:342.2px;width:1px;height:18px;background:#a9c0d8;"></div>
<div class="b" style="left:1499.5px;top:342.2px;width:1px;height:18px;background:#a9c0d8;"></div>
<div class="b" style="left:1702.6px;top:342.2px;width:1px;height:18px;background:#a9c0d8;"></div>
<div class="b" style="left:1794.4px;top:342.2px;width:1px;height:18px;background:#a9c0d8;"></div>
<div class="b" style="left:1165.6px;top:322.9px;width:1px;height:18px;background:#a9c0d8;"></div>
<div class="b" style="left:1499.5px;top:322.9px;width:1px;height:18px;background:#a9c0d8;"></div>
<div class="b" style="left:802.8px;top:341.2px;width:697.6px;height:1px;background:#a9c0d8;"></div>
<div class="b" style="left:1611.9px;top:341.2px;width:275.5px;height:1px;background:#a9c0d8;"></div>
<span class="t" style="left:136.38px;top:346.34px;font-size:12px;color:#fff;font-weight:700;transform:scaleX(0.9500);transform-origin:50% 50%;">Pozycja raportowa</span>
<span class="t" style="left:375.62px;top:346.34px;font-size:12px;color:#fff;font-weight:700;transform:scaleX(0.9627);transform-origin:50% 50%;">Produkt / składnik</span>
<span class="t" style="left:627.61px;top:346.34px;font-size:12px;color:#fff;font-weight:700;transform:scaleX(0.9396);transform-origin:50% 50%;">Typ składnika</span>
<span class="t" style="left:743.64px;top:346.34px;font-size:12px;color:#fff;font-weight:700;transform:scaleX(0.9502);transform-origin:50% 50%;">jednostka</span>
<span class="t" style="left:849.83px;top:346.34px;font-size:12px;color:#fff;font-weight:700;transform:scaleX(0.8895);transform-origin:50% 50%;">Ilość</span>
<span class="t" style="left:964.12px;top:346.34px;font-size:12px;color:#fff;font-weight:700;transform:scaleX(0.9544);transform-origin:50% 50%;">Stawka</span>
<span class="t" style="left:1082.5px;top:346.34px;font-size:12px;color:#fff;font-weight:700;transform:scaleX(0.9605);transform-origin:50% 50%;">Wartość</span>
<span class="t" style="left:1213.18px;top:346.34px;font-size:12px;color:#fff;font-weight:700;transform:scaleX(0.8895);transform-origin:50% 50%;">Ilość</span>
<span class="t" style="left:1327.02px;top:346.34px;font-size:12px;color:#fff;font-weight:700;transform:scaleX(0.9544);transform-origin:50% 50%;">Stawka</span>
<span class="t" style="left:1430.85px;top:346.34px;font-size:12px;color:#fff;font-weight:700;transform:scaleX(0.9605);transform-origin:50% 50%;">Wartość</span>
<span class="t" style="left:1637.02px;top:346.34px;font-size:12px;color:#fff;font-weight:700;transform:scaleX(0.9544);transform-origin:50% 50%;">Stawka</span>
<span class="t" style="left:1730.74px;top:346.34px;font-size:12px;color:#fff;font-weight:700;transform:scaleX(0.9435);transform-origin:50% 50%;">Źródło</span>
<span class="t" style="left:1817.9px;top:346.34px;font-size:12px;color:#fff;font-weight:700;transform:scaleX(0.9605);transform-origin:50% 50%;">Wartość</span>
<span class="t" style="left:955.63px;top:327.34px;font-size:12px;color:#fff;font-weight:700;transform:scaleX(0.9220);transform-origin:50% 50%;">Realizacja</span>
<span class="t" style="left:1319.79px;top:327.34px;font-size:12px;color:#fff;font-weight:700;transform:scaleX(0.9517);transform-origin:50% 50%;">TKW</span>
<span class="t" style="left:1514.21px;top:335.54px;font-size:12px;color:#fff;font-weight:700;transform:scaleX(0.9419);transform-origin:50% 50%;">Odchylenie</span>
<span class="t" style="left:1698.3px;top:327.34px;font-size:12px;color:#fff;font-weight:700;transform:scaleX(0.9315);transform-origin:50% 50%;">Koszt teoretyczny</span>
<div class="clip" style="left:0;top:361px;width:1912.2px;height:622.6px"><div class="b" style="left:0;top:-361px;width:1912.2px;height:1000px">
<div class="b" style="left:117.4px;top:361px;width:1475.3px;height:19.17px;background:#b4c6e7;"></div>
<div class="b" style="left:1611.9px;top:361px;width:275.5px;height:19.17px;background:#b4c6e7;"></div>
<div class="b" style="left:1906.4px;top:361px;width:6px;height:19.17px;background:#b4c6e7;"></div>
<div class="b" style="left:117.4px;top:667.72px;width:1475.3px;height:19.17px;background:#b4c6e7;"></div>
<div class="b" style="left:1611.9px;top:667.72px;width:275.5px;height:19.17px;background:#b4c6e7;"></div>
<div class="b" style="left:1906.4px;top:667.72px;width:6px;height:19.17px;background:#b4c6e7;"></div>
<div class="b" style="left:117.4px;top:648.55px;width:1475.3px;height:19.17px;background:#44546a;"></div>
<div class="b" style="left:1611.9px;top:648.55px;width:275.5px;height:19.17px;background:#44546a;"></div>
<div class="b" style="left:117.4px;top:379.67px;width:1475.3px;height:1px;background:#d6d6d6;"></div>
<div class="b" style="left:1611.9px;top:379.67px;width:275.5px;height:1px;background:#d6d6d6;"></div>
<div class="b" style="left:1906.4px;top:379.67px;width:6px;height:1px;background:#d6d6d6;"></div>
<div class="b" style="left:117.4px;top:398.84px;width:1475.3px;height:1px;background:#d6d6d6;"></div>
<div class="b" style="left:1611.9px;top:398.84px;width:275.5px;height:1px;background:#d6d6d6;"></div>
<div class="b" style="left:1906.4px;top:398.84px;width:6px;height:1px;background:#d6d6d6;"></div>
<div class="b" style="left:117.4px;top:418.01px;width:1475.3px;height:1px;background:#d6d6d6;"></div>
<div class="b" style="left:1611.9px;top:418.01px;width:275.5px;height:1px;background:#d6d6d6;"></div>
<div class="b" style="left:1906.4px;top:418.01px;width:6px;height:1px;background:#d6d6d6;"></div>
<div class="b" style="left:117.4px;top:437.18px;width:1475.3px;height:1px;background:#d6d6d6;"></div>
<div class="b" style="left:1611.9px;top:437.18px;width:275.5px;height:1px;background:#d6d6d6;"></div>
<div class="b" style="left:1906.4px;top:437.18px;width:6px;height:1px;background:#d6d6d6;"></div>
<div class="b" style="left:117.4px;top:456.35px;width:1475.3px;height:1px;background:#d6d6d6;"></div>
<div class="b" style="left:1611.9px;top:456.35px;width:275.5px;height:1px;background:#d6d6d6;"></div>
<div class="b" style="left:1906.4px;top:456.35px;width:6px;height:1px;background:#d6d6d6;"></div>
<div class="b" style="left:117.4px;top:475.52px;width:1475.3px;height:1px;background:#d6d6d6;"></div>
<div class="b" style="left:1611.9px;top:475.52px;width:275.5px;height:1px;background:#d6d6d6;"></div>
<div class="b" style="left:1906.4px;top:475.52px;width:6px;height:1px;background:#d6d6d6;"></div>
<div class="b" style="left:117.4px;top:494.69px;width:1475.3px;height:1px;background:#d6d6d6;"></div>
<div class="b" style="left:1611.9px;top:494.69px;width:275.5px;height:1px;background:#d6d6d6;"></div>
<div class="b" style="left:1906.4px;top:494.69px;width:6px;height:1px;background:#d6d6d6;"></div>
<div class="b" style="left:117.4px;top:513.86px;width:1475.3px;height:1px;background:#d6d6d6;"></div>
<div class="b" style="left:1611.9px;top:513.86px;width:275.5px;height:1px;background:#d6d6d6;"></div>
<div class="b" style="left:1906.4px;top:513.86px;width:6px;height:1px;background:#d6d6d6;"></div>
<div class="b" style="left:117.4px;top:533.03px;width:1475.3px;height:1px;background:#d6d6d6;"></div>
<div class="b" style="left:1611.9px;top:533.03px;width:275.5px;height:1px;background:#d6d6d6;"></div>
<div class="b" style="left:1906.4px;top:533.03px;width:6px;height:1px;background:#d6d6d6;"></div>
<div class="b" style="left:117.4px;top:552.2px;width:1475.3px;height:1px;background:#d6d6d6;"></div>
<div class="b" style="left:1611.9px;top:552.2px;width:275.5px;height:1px;background:#d6d6d6;"></div>
<div class="b" style="left:1906.4px;top:552.2px;width:6px;height:1px;background:#d6d6d6;"></div>
<div class="b" style="left:117.4px;top:571.37px;width:1475.3px;height:1px;background:#d6d6d6;"></div>
<div class="b" style="left:1611.9px;top:571.37px;width:275.5px;height:1px;background:#d6d6d6;"></div>
<div class="b" style="left:1906.4px;top:571.37px;width:6px;height:1px;background:#d6d6d6;"></div>
<div class="b" style="left:117.4px;top:590.54px;width:1475.3px;height:1px;background:#d6d6d6;"></div>
<div class="b" style="left:1611.9px;top:590.54px;width:275.5px;height:1px;background:#d6d6d6;"></div>
<div class="b" style="left:1906.4px;top:590.54px;width:6px;height:1px;background:#d6d6d6;"></div>
<div class="b" style="left:117.4px;top:609.71px;width:1475.3px;height:1px;background:#d6d6d6;"></div>
<div class="b" style="left:1611.9px;top:609.71px;width:275.5px;height:1px;background:#d6d6d6;"></div>
<div class="b" style="left:1906.4px;top:609.71px;width:6px;height:1px;background:#d6d6d6;"></div>
<div class="b" style="left:117.4px;top:628.88px;width:1475.3px;height:1px;background:#d6d6d6;"></div>
<div class="b" style="left:1611.9px;top:628.88px;width:275.5px;height:1px;background:#d6d6d6;"></div>
<div class="b" style="left:1906.4px;top:628.88px;width:6px;height:1px;background:#d6d6d6;"></div>
<div class="b" style="left:117.4px;top:648.05px;width:1475.3px;height:1px;background:#d6d6d6;"></div>
<div class="b" style="left:1611.9px;top:648.05px;width:275.5px;height:1px;background:#d6d6d6;"></div>
<div class="b" style="left:1906.4px;top:648.05px;width:6px;height:1px;background:#d6d6d6;"></div>
<div class="b" style="left:117.4px;top:667.22px;width:1475.3px;height:1px;background:#d6d6d6;"></div>
<div class="b" style="left:1611.9px;top:667.22px;width:275.5px;height:1px;background:#d6d6d6;"></div>
<div class="b" style="left:1906.4px;top:667.22px;width:6px;height:1px;background:#d6d6d6;"></div>
<div class="b" style="left:117.4px;top:686.39px;width:1475.3px;height:1px;background:#d6d6d6;"></div>
<div class="b" style="left:1611.9px;top:686.39px;width:275.5px;height:1px;background:#d6d6d6;"></div>
<div class="b" style="left:1906.4px;top:686.39px;width:6px;height:1px;background:#d6d6d6;"></div>
<div class="b" style="left:117.4px;top:705.56px;width:1475.3px;height:1px;background:#d6d6d6;"></div>
<div class="b" style="left:1611.9px;top:705.56px;width:275.5px;height:1px;background:#d6d6d6;"></div>
<div class="b" style="left:1906.4px;top:705.56px;width:6px;height:1px;background:#d6d6d6;"></div>
<div class="b" style="left:117.4px;top:724.73px;width:1475.3px;height:1px;background:#d6d6d6;"></div>
<div class="b" style="left:1611.9px;top:724.73px;width:275.5px;height:1px;background:#d6d6d6;"></div>
<div class="b" style="left:1906.4px;top:724.73px;width:6px;height:1px;background:#d6d6d6;"></div>
<div class="b" style="left:117.4px;top:743.9px;width:1475.3px;height:1px;background:#d6d6d6;"></div>
<div class="b" style="left:1611.9px;top:743.9px;width:275.5px;height:1px;background:#d6d6d6;"></div>
<div class="b" style="left:1906.4px;top:743.9px;width:6px;height:1px;background:#d6d6d6;"></div>
<div class="b" style="left:117.4px;top:763.07px;width:1475.3px;height:1px;background:#d6d6d6;"></div>
<div class="b" style="left:1611.9px;top:763.07px;width:275.5px;height:1px;background:#d6d6d6;"></div>
<div class="b" style="left:1906.4px;top:763.07px;width:6px;height:1px;background:#d6d6d6;"></div>
<div class="b" style="left:117.4px;top:782.24px;width:1475.3px;height:1px;background:#d6d6d6;"></div>
<div class="b" style="left:1611.9px;top:782.24px;width:275.5px;height:1px;background:#d6d6d6;"></div>
<div class="b" style="left:1906.4px;top:782.24px;width:6px;height:1px;background:#d6d6d6;"></div>
<div class="b" style="left:117.4px;top:801.41px;width:1475.3px;height:1px;background:#d6d6d6;"></div>
<div class="b" style="left:1611.9px;top:801.41px;width:275.5px;height:1px;background:#d6d6d6;"></div>
<div class="b" style="left:1906.4px;top:801.41px;width:6px;height:1px;background:#d6d6d6;"></div>
<div class="b" style="left:117.4px;top:820.58px;width:1475.3px;height:1px;background:#d6d6d6;"></div>
<div class="b" style="left:1611.9px;top:820.58px;width:275.5px;height:1px;background:#d6d6d6;"></div>
<div class="b" style="left:1906.4px;top:820.58px;width:6px;height:1px;background:#d6d6d6;"></div>
<div class="b" style="left:117.4px;top:839.75px;width:1475.3px;height:1px;background:#d6d6d6;"></div>
<div class="b" style="left:1611.9px;top:839.75px;width:275.5px;height:1px;background:#d6d6d6;"></div>
<div class="b" style="left:1906.4px;top:839.75px;width:6px;height:1px;background:#d6d6d6;"></div>
<div class="b" style="left:117.4px;top:858.92px;width:1475.3px;height:1px;background:#d6d6d6;"></div>
<div class="b" style="left:1611.9px;top:858.92px;width:275.5px;height:1px;background:#d6d6d6;"></div>
<div class="b" style="left:1906.4px;top:858.92px;width:6px;height:1px;background:#d6d6d6;"></div>
<div class="b" style="left:117.4px;top:878.09px;width:1475.3px;height:1px;background:#d6d6d6;"></div>
<div class="b" style="left:1611.9px;top:878.09px;width:275.5px;height:1px;background:#d6d6d6;"></div>
<div class="b" style="left:1906.4px;top:878.09px;width:6px;height:1px;background:#d6d6d6;"></div>
<div class="b" style="left:117.4px;top:897.26px;width:1475.3px;height:1px;background:#d6d6d6;"></div>
<div class="b" style="left:1611.9px;top:897.26px;width:275.5px;height:1px;background:#d6d6d6;"></div>
<div class="b" style="left:1906.4px;top:897.26px;width:6px;height:1px;background:#d6d6d6;"></div>
<div class="b" style="left:117.4px;top:916.43px;width:1475.3px;height:1px;background:#d6d6d6;"></div>
<div class="b" style="left:1611.9px;top:916.43px;width:275.5px;height:1px;background:#d6d6d6;"></div>
<div class="b" style="left:1906.4px;top:916.43px;width:6px;height:1px;background:#d6d6d6;"></div>
<div class="b" style="left:117.4px;top:935.6px;width:1475.3px;height:1px;background:#d6d6d6;"></div>
<div class="b" style="left:1611.9px;top:935.6px;width:275.5px;height:1px;background:#d6d6d6;"></div>
<div class="b" style="left:1906.4px;top:935.6px;width:6px;height:1px;background:#d6d6d6;"></div>
<div class="b" style="left:117.4px;top:954.77px;width:1475.3px;height:1px;background:#d6d6d6;"></div>
<div class="b" style="left:1611.9px;top:954.77px;width:275.5px;height:1px;background:#d6d6d6;"></div>
<div class="b" style="left:1906.4px;top:954.77px;width:6px;height:1px;background:#d6d6d6;"></div>
<div class="b" style="left:117.4px;top:973.94px;width:1475.3px;height:1px;background:#d6d6d6;"></div>
<div class="b" style="left:1611.9px;top:973.94px;width:275.5px;height:1px;background:#d6d6d6;"></div>
<div class="b" style="left:1906.4px;top:973.94px;width:6px;height:1px;background:#d6d6d6;"></div>
<div class="b" style="left:117.4px;top:993.11px;width:1475.3px;height:1px;background:#d6d6d6;"></div>
<div class="b" style="left:1611.9px;top:993.11px;width:275.5px;height:1px;background:#d6d6d6;"></div>
<div class="b" style="left:1906.4px;top:993.11px;width:6px;height:1px;background:#d6d6d6;"></div>
<div class="b" style="left:116.5px;top:361.8px;width:1px;height:622.6px;background:#d6d6d6;"></div>
<div class="b" style="left:260.5px;top:361.8px;width:1px;height:622.6px;background:#d6d6d6;"></div>
<div class="b" style="left:592.3px;top:361.8px;width:1px;height:622.6px;background:#d6d6d6;"></div>
<div class="b" style="left:739.6px;top:361.8px;width:1px;height:622.6px;background:#d6d6d6;"></div>
<div class="b" style="left:801.9px;top:361.8px;width:1px;height:622.6px;background:#d6d6d6;"></div>
<div class="b" style="left:923.3px;top:361.8px;width:1px;height:622.6px;background:#d6d6d6;"></div>
<div class="b" style="left:1044.5px;top:361.8px;width:1px;height:622.6px;background:#d6d6d6;"></div>
<div class="b" style="left:1165.6px;top:361.8px;width:1px;height:622.6px;background:#d6d6d6;"></div>
<div class="b" style="left:1286.3px;top:361.8px;width:1px;height:622.6px;background:#d6d6d6;"></div>
<div class="b" style="left:1407.3px;top:361.8px;width:1px;height:622.6px;background:#d6d6d6;"></div>
<div class="b" style="left:1499.5px;top:361.8px;width:1px;height:622.6px;background:#d6d6d6;"></div>
<div class="b" style="left:1591.8px;top:361.8px;width:1px;height:622.6px;background:#d6d6d6;"></div>
<div class="b" style="left:1611px;top:361.8px;width:1px;height:622.6px;background:#d6d6d6;"></div>
<div class="b" style="left:1702.6px;top:361.8px;width:1px;height:622.6px;background:#d6d6d6;"></div>
<div class="b" style="left:1794.4px;top:361.8px;width:1px;height:622.6px;background:#d6d6d6;"></div>
<div class="b" style="left:1886.5px;top:361.8px;width:1px;height:622.6px;background:#d6d6d6;"></div>
<div class="b" style="left:1905.5px;top:361.8px;width:1px;height:622.6px;background:#d6d6d6;"></div>
<span class="t" style="left:120px;top:364.89px;font-size:12px;color:#000;font-weight:700;transform:scaleX(1.1375);transform-origin:0 50%;">62/02/2023</span>
<span class="t" style="left:763.28px;top:364.89px;font-size:12px;color:#000;font-weight:700;transform:scaleX(1.0112);transform-origin:50% 50%;">m2</span>
<span class="t" style="left:868.31px;top:364.89px;font-size:12px;color:#000;font-weight:700;transform:scaleX(1.0529);transform-origin:100% 50%;">54 450,00</span>
<span class="t" style="left:1005.8px;top:365.79px;font-size:12px;color:#000;font-weight:700;transform:scaleX(1.0620);transform-origin:100% 50%;">2,1313</span>
<span class="t" style="left:1104.6px;top:364.89px;font-size:12px;color:#000;font-weight:700;transform:scaleX(1.0660);transform-origin:100% 50%;">116 049,85</span>
<span class="t" style="left:1369px;top:364.89px;font-size:12px;color:#000;font-weight:700;transform:scaleX(1.0620);transform-origin:100% 50%;">2,0705</span>
<span class="t" style="left:1438.5px;top:364.89px;font-size:12px;color:#000;font-weight:700;transform:scaleX(1.0660);transform-origin:100% 50%;">112 738,24</span>
<span class="t" style="left:1544.15px;top:364.89px;font-size:12px;color:#000;font-weight:700;transform:scaleX(1.0663);transform-origin:100% 50%;">3 311,61</span>
<span class="t" style="left:1664.3px;top:364.89px;font-size:12px;color:#000;font-weight:700;transform:scaleX(1.0620);transform-origin:100% 50%;">2,1345</span>
<span class="t" style="left:1825.5px;top:364.89px;font-size:12px;color:#000;font-weight:700;transform:scaleX(1.0660);transform-origin:100% 50%;">116 225,53</span>
<span class="t" style="left:120px;top:384.06px;font-size:12px;color:#000;transform:scaleX(0.9514);transform-origin:0 50%;">SYMBOL 8895</span>
<span class="t" style="left:264px;top:384.06px;font-size:12px;color:#000;transform:scaleX(0.9338);transform-origin:0 50%;">INDEKS 8895</span>
<span class="t" style="left:595.8px;top:384.06px;font-size:12px;color:#000;transform:scaleX(0.9184);transform-origin:0 50%;">MATERIAL</span>
<span class="t" style="left:764.28px;top:384.06px;font-size:12px;color:#000;transform:scaleX(0.9746);transform-origin:50% 50%;">szt</span>
<span class="t" style="left:874.99px;top:384.06px;font-size:12px;color:#000;">1 121,00</span>
<span class="t" style="left:1005.8px;top:384.96px;font-size:12px;color:#000;transform:scaleX(1.0110);transform-origin:100% 50%;">0,1554</span>
<span class="t" style="left:1127.3px;top:384.06px;font-size:12px;color:#000;transform:scaleX(1.0110);transform-origin:100% 50%;">174,23</span>
<span class="t" style="left:1237.99px;top:384.06px;font-size:12px;color:#000;">1 122,00</span>
<span class="t" style="left:1369px;top:384.06px;font-size:12px;color:#000;transform:scaleX(1.0110);transform-origin:100% 50%;">0,2200</span>
<span class="t" style="left:1461.2px;top:384.06px;font-size:12px;color:#000;transform:scaleX(1.0110);transform-origin:100% 50%;">246,84</span>
<span class="t" style="left:1556.17px;top:384.06px;font-size:12px;color:#000;transform:scaleX(1.0119);transform-origin:100% 50%;">-72,61</span>
<span class="t" style="left:1664.3px;top:384.06px;font-size:12px;color:#000;transform:scaleX(1.0110);transform-origin:100% 50%;">0,2200</span>
<span class="t" style="left:1766.14px;top:384.06px;font-size:12px;color:#000;transform:scaleX(0.9482);transform-origin:100% 50%;">TKW</span>
<span class="t" style="left:1848.2px;top:384.06px;font-size:12px;color:#000;transform:scaleX(1.0110);transform-origin:100% 50%;">246,62</span>
<span class="t" style="left:120px;top:403.23px;font-size:12px;color:#000;transform:scaleX(0.9661);transform-origin:0 50%;">SYMBOL 11616</span>
<span class="t" style="left:264px;top:403.23px;font-size:12px;color:#000;transform:scaleX(0.9506);transform-origin:0 50%;">INDEKS 11616</span>
<span class="t" style="left:595.8px;top:403.23px;font-size:12px;color:#000;transform:scaleX(0.9184);transform-origin:0 50%;">MATERIAL</span>
<span class="t" style="left:764.28px;top:403.23px;font-size:12px;color:#000;transform:scaleX(0.9746);transform-origin:50% 50%;">szt</span>
<span class="t" style="left:891.67px;top:403.23px;font-size:12px;color:#000;transform:scaleX(1.0107);transform-origin:100% 50%;">33,00</span>
<span class="t" style="left:999.12px;top:404.13px;font-size:12px;color:#000;transform:scaleX(1.0112);transform-origin:100% 50%;">27,2600</span>
<span class="t" style="left:1127.3px;top:403.23px;font-size:12px;color:#000;transform:scaleX(1.0110);transform-origin:100% 50%;">899,58</span>
<span class="t" style="left:1254.67px;top:403.23px;font-size:12px;color:#000;transform:scaleX(1.0107);transform-origin:100% 50%;">33,00</span>
<span class="t" style="left:1362.32px;top:403.23px;font-size:12px;color:#000;transform:scaleX(1.0112);transform-origin:100% 50%;">29,0000</span>
<span class="t" style="left:1461.2px;top:403.23px;font-size:12px;color:#000;transform:scaleX(1.0110);transform-origin:100% 50%;">957,00</span>
<span class="t" style="left:1556.17px;top:403.23px;font-size:12px;color:#000;transform:scaleX(1.0119);transform-origin:100% 50%;">-57,42</span>
<span class="t" style="left:1657.62px;top:403.23px;font-size:12px;color:#000;transform:scaleX(1.0112);transform-origin:100% 50%;">29,0000</span>
<span class="t" style="left:1766.14px;top:403.23px;font-size:12px;color:#000;transform:scaleX(0.9482);transform-origin:100% 50%;">TKW</span>
<span class="t" style="left:1848.2px;top:403.23px;font-size:12px;color:#000;transform:scaleX(1.0110);transform-origin:100% 50%;">957,00</span>
<span class="t" style="left:120px;top:422.4px;font-size:12px;color:#000;transform:scaleX(0.9561);transform-origin:0 50%;">SYMBOL 13575</span>
<span class="t" style="left:264px;top:422.4px;font-size:12px;color:#000;transform:scaleX(0.9402);transform-origin:0 50%;">INDEKS 13575</span>
<span class="t" style="left:595.8px;top:422.4px;font-size:12px;color:#000;transform:scaleX(0.9184);transform-origin:0 50%;">MATERIAL</span>
<span class="t" style="left:764.28px;top:422.4px;font-size:12px;color:#000;transform:scaleX(0.9746);transform-origin:50% 50%;">szt</span>
<span class="t" style="left:891.67px;top:422.4px;font-size:12px;color:#000;transform:scaleX(1.0107);transform-origin:100% 50%;">33,00</span>
<span class="t" style="left:999.12px;top:423.3px;font-size:12px;color:#000;transform:scaleX(1.0112);transform-origin:100% 50%;">29,9000</span>
<span class="t" style="left:1127.3px;top:422.4px;font-size:12px;color:#000;transform:scaleX(1.0110);transform-origin:100% 50%;">986,70</span>
<span class="t" style="left:1254.67px;top:422.4px;font-size:12px;color:#000;transform:scaleX(1.0107);transform-origin:100% 50%;">33,00</span>
<span class="t" style="left:1362.32px;top:422.4px;font-size:12px;color:#000;transform:scaleX(1.0112);transform-origin:100% 50%;">31,2900</span>
<span class="t" style="left:1451.19px;top:422.4px;font-size:12px;color:#000;">1 032,57</span>
<span class="t" style="left:1556.17px;top:422.4px;font-size:12px;color:#000;transform:scaleX(1.0119);transform-origin:100% 50%;">-45,87</span>
<span class="t" style="left:1657.62px;top:422.4px;font-size:12px;color:#000;transform:scaleX(1.0112);transform-origin:100% 50%;">31,2900</span>
<span class="t" style="left:1766.14px;top:422.4px;font-size:12px;color:#000;transform:scaleX(0.9482);transform-origin:100% 50%;">TKW</span>
<span class="t" style="left:1838.19px;top:422.4px;font-size:12px;color:#000;">1 032,57</span>
<span class="t" style="left:120px;top:441.57px;font-size:12px;color:#000;transform:scaleX(0.9661);transform-origin:0 50%;">SYMBOL 13711</span>
<span class="t" style="left:264px;top:441.57px;font-size:12px;color:#000;transform:scaleX(0.9506);transform-origin:0 50%;">INDEKS 13711</span>
<span class="t" style="left:595.8px;top:441.57px;font-size:12px;color:#000;transform:scaleX(0.9184);transform-origin:0 50%;">MATERIAL</span>
<span class="t" style="left:764.28px;top:441.57px;font-size:12px;color:#000;transform:scaleX(0.9746);transform-origin:50% 50%;">szt</span>
<span class="t" style="left:874.99px;top:441.57px;font-size:12px;color:#000;">1 121,67</span>
<span class="t" style="left:1005.8px;top:442.47px;font-size:12px;color:#000;transform:scaleX(1.0110);transform-origin:100% 50%;">0,9400</span>
<span class="t" style="left:1117.29px;top:441.57px;font-size:12px;color:#000;">1 054,37</span>
<span class="t" style="left:1237.99px;top:441.57px;font-size:12px;color:#000;">1 121,67</span>
<span class="t" style="left:1369px;top:441.57px;font-size:12px;color:#000;transform:scaleX(1.0110);transform-origin:100% 50%;">0,9400</span>
<span class="t" style="left:1451.19px;top:441.57px;font-size:12px;color:#000;">1 054,37</span>
<span class="t" style="left:1566.84px;top:441.57px;font-size:12px;color:#000;transform:scaleX(1.0102);transform-origin:100% 50%;">0,00</span>
<span class="t" style="left:1664.3px;top:441.57px;font-size:12px;color:#000;transform:scaleX(1.0110);transform-origin:100% 50%;">0,9400</span>
<span class="t" style="left:1766.14px;top:441.57px;font-size:12px;color:#000;transform:scaleX(0.9482);transform-origin:100% 50%;">TKW</span>
<span class="t" style="left:1838.19px;top:441.57px;font-size:12px;color:#000;">1 054,37</span>
<span class="t" style="left:120px;top:460.74px;font-size:12px;color:#000;transform:scaleX(0.9561);transform-origin:0 50%;">SYMBOL 26910</span>
<span class="t" style="left:264px;top:460.74px;font-size:12px;color:#000;transform:scaleX(0.9402);transform-origin:0 50%;">INDEKS 26910</span>
<span class="t" style="left:595.8px;top:460.74px;font-size:12px;color:#000;transform:scaleX(0.9184);transform-origin:0 50%;">MATERIAL</span>
<span class="t" style="left:764.28px;top:460.74px;font-size:12px;color:#000;transform:scaleX(0.9746);transform-origin:50% 50%;">szt</span>
<span class="t" style="left:891.67px;top:460.74px;font-size:12px;color:#000;transform:scaleX(1.0107);transform-origin:100% 50%;">33,00</span>
<span class="t" style="left:1005.8px;top:461.64px;font-size:12px;color:#000;transform:scaleX(1.0110);transform-origin:100% 50%;">0,0900</span>
<span class="t" style="left:1140.64px;top:460.74px;font-size:12px;color:#000;transform:scaleX(1.0102);transform-origin:100% 50%;">2,97</span>
<span class="t" style="left:1254.67px;top:460.74px;font-size:12px;color:#000;transform:scaleX(1.0107);transform-origin:100% 50%;">33,00</span>
<span class="t" style="left:1369px;top:460.74px;font-size:12px;color:#000;transform:scaleX(1.0110);transform-origin:100% 50%;">0,0900</span>
<span class="t" style="left:1474.54px;top:460.74px;font-size:12px;color:#000;transform:scaleX(1.0102);transform-origin:100% 50%;">2,97</span>
<span class="t" style="left:1566.84px;top:460.74px;font-size:12px;color:#000;transform:scaleX(1.0102);transform-origin:100% 50%;">0,00</span>
<span class="t" style="left:1664.3px;top:460.74px;font-size:12px;color:#000;transform:scaleX(1.0110);transform-origin:100% 50%;">0,0900</span>
<span class="t" style="left:1766.14px;top:460.74px;font-size:12px;color:#000;transform:scaleX(0.9482);transform-origin:100% 50%;">TKW</span>
<span class="t" style="left:1861.54px;top:460.74px;font-size:12px;color:#000;transform:scaleX(1.0102);transform-origin:100% 50%;">2,97</span>
<span class="t" style="left:120px;top:479.91px;font-size:12px;color:#000;transform:scaleX(0.9561);transform-origin:0 50%;">SYMBOL 30456</span>
<span class="t" style="left:264px;top:479.91px;font-size:12px;color:#000;transform:scaleX(0.9402);transform-origin:0 50%;">INDEKS 30456</span>
<span class="t" style="left:595.8px;top:479.91px;font-size:12px;color:#000;transform:scaleX(0.9184);transform-origin:0 50%;">MATERIAL</span>
<span class="t" style="left:764.28px;top:479.91px;font-size:12px;color:#000;transform:scaleX(0.9746);transform-origin:50% 50%;">szt</span>
<span class="t" style="left:874.99px;top:479.91px;font-size:12px;color:#000;">1 089,00</span>
<span class="t" style="left:1005.8px;top:480.81px;font-size:12px;color:#000;transform:scaleX(1.0110);transform-origin:100% 50%;">0,5000</span>
<span class="t" style="left:1127.3px;top:479.91px;font-size:12px;color:#000;transform:scaleX(1.0110);transform-origin:100% 50%;">544,50</span>
<span class="t" style="left:1237.99px;top:479.91px;font-size:12px;color:#000;">1 089,00</span>
<span class="t" style="left:1369px;top:479.91px;font-size:12px;color:#000;transform:scaleX(1.0110);transform-origin:100% 50%;">0,5000</span>
<span class="t" style="left:1461.2px;top:479.91px;font-size:12px;color:#000;transform:scaleX(1.0110);transform-origin:100% 50%;">544,50</span>
<span class="t" style="left:1566.84px;top:479.91px;font-size:12px;color:#000;transform:scaleX(1.0102);transform-origin:100% 50%;">0,00</span>
<span class="t" style="left:1664.3px;top:479.91px;font-size:12px;color:#000;transform:scaleX(1.0110);transform-origin:100% 50%;">0,5000</span>
<span class="t" style="left:1766.14px;top:479.91px;font-size:12px;color:#000;transform:scaleX(0.9482);transform-origin:100% 50%;">TKW</span>
<span class="t" style="left:1848.2px;top:479.91px;font-size:12px;color:#000;transform:scaleX(1.0110);transform-origin:100% 50%;">544,50</span>
<span class="t" style="left:120px;top:499.08px;font-size:12px;color:#000;transform:scaleX(0.9561);transform-origin:0 50%;">SYMBOL 28850</span>
<span class="t" style="left:264px;top:499.08px;font-size:12px;color:#000;transform:scaleX(0.9402);transform-origin:0 50%;">INDEKS 28850</span>
<span class="t" style="left:595.8px;top:499.08px;font-size:12px;color:#000;transform:scaleX(0.8950);transform-origin:0 50%;">POLPRODUKT</span>
<span class="t" style="left:763.61px;top:499.08px;font-size:12px;color:#000;transform:scaleX(1.0589);transform-origin:50% 50%;">mb</span>
<span class="t" style="left:868.31px;top:499.08px;font-size:12px;color:#000;transform:scaleX(1.0046);transform-origin:100% 50%;">54 720,00</span>
<span class="t" style="left:1005.8px;top:499.98px;font-size:12px;color:#000;transform:scaleX(1.0110);transform-origin:100% 50%;">2,0539</span>
<span class="t" style="left:1104.83px;top:499.08px;font-size:12px;color:#000;transform:scaleX(1.0206);transform-origin:100% 50%;">112 387,50</span>
<span class="t" style="left:1231.31px;top:499.08px;font-size:12px;color:#000;transform:scaleX(1.0046);transform-origin:100% 50%;">54 450,00</span>
<span class="t" style="left:1369px;top:499.08px;font-size:12px;color:#000;transform:scaleX(1.0110);transform-origin:100% 50%;">2,0000</span>
<span class="t" style="left:1437.84px;top:499.08px;font-size:12px;color:#000;transform:scaleX(1.0055);transform-origin:100% 50%;">108 900,00</span>
<span class="t" style="left:1543.49px;top:499.08px;font-size:12px;color:#000;">3 487,50</span>
<span class="t" style="left:1664.3px;top:499.08px;font-size:12px;color:#000;transform:scaleX(1.0110);transform-origin:100% 50%;">2,0539</span>
<span class="t" style="left:1773.02px;top:499.08px;font-size:12px;color:#000;transform:scaleX(0.9657);transform-origin:100% 50%;">RW</span>
<span class="t" style="left:1825.73px;top:499.08px;font-size:12px;color:#000;transform:scaleX(1.0206);transform-origin:100% 50%;">112 387,50</span>
<span class="t" style="left:120px;top:518.25px;font-size:12px;color:#000;transform:scaleX(0.9561);transform-origin:0 50%;">SYMBOL 30470</span>
<span class="t" style="left:264px;top:518.25px;font-size:12px;color:#000;transform:scaleX(0.9402);transform-origin:0 50%;">INDEKS 30470</span>
<span class="t" style="left:595.8px;top:518.25px;font-size:12px;color:#000;transform:scaleX(0.8713);transform-origin:0 50%;">USLUGA</span>
<span class="t" style="left:763.61px;top:518.25px;font-size:12px;color:#000;transform:scaleX(1.0440);transform-origin:50% 50%;">m2</span>
<span class="t" style="left:868.31px;top:518.25px;font-size:12px;color:#000;transform:scaleX(1.0046);transform-origin:100% 50%;">54 450,00</span>
<span class="t" style="left:1005.8px;top:519.15px;font-size:12px;color:#000;transform:scaleX(1.0110);transform-origin:100% 50%;">0,0000</span>
<span class="t" style="left:1140.64px;top:518.25px;font-size:12px;color:#000;transform:scaleX(1.0102);transform-origin:100% 50%;">0,00</span>
<span class="t" style="left:1231.31px;top:518.25px;font-size:12px;color:#000;transform:scaleX(1.0046);transform-origin:100% 50%;">54 450,00</span>
<span class="t" style="left:1369px;top:518.25px;font-size:12px;color:#000;transform:scaleX(1.0110);transform-origin:100% 50%;">0,0000</span>
<span class="t" style="left:1474.54px;top:518.25px;font-size:12px;color:#000;transform:scaleX(1.0102);transform-origin:100% 50%;">0,00</span>
<span class="t" style="left:1566.84px;top:518.25px;font-size:12px;color:#000;transform:scaleX(1.0102);transform-origin:100% 50%;">0,00</span>
<span class="t" style="left:1664.3px;top:518.25px;font-size:12px;color:#000;transform:scaleX(1.0110);transform-origin:100% 50%;">0,0000</span>
<span class="t" style="left:1766.14px;top:518.25px;font-size:12px;color:#000;transform:scaleX(0.9482);transform-origin:100% 50%;">TKW</span>
<span class="t" style="left:1861.54px;top:518.25px;font-size:12px;color:#000;transform:scaleX(1.0102);transform-origin:100% 50%;">0,00</span>
<span class="t" style="left:120px;top:537.42px;font-size:12px;color:#000;transform:scaleX(0.9561);transform-origin:0 50%;">SYMBOL 30471</span>
<span class="t" style="left:264px;top:537.42px;font-size:12px;color:#000;transform:scaleX(0.9402);transform-origin:0 50%;">INDEKS 30471</span>
<span class="t" style="left:595.8px;top:537.42px;font-size:12px;color:#000;transform:scaleX(0.8713);transform-origin:0 50%;">USLUGA</span>
<span class="t" style="left:763.61px;top:537.42px;font-size:12px;color:#000;transform:scaleX(1.0440);transform-origin:50% 50%;">m2</span>
<span class="t" style="left:868.31px;top:537.42px;font-size:12px;color:#000;transform:scaleX(1.0046);transform-origin:100% 50%;">54 450,00</span>
<span class="t" style="left:1005.8px;top:538.32px;font-size:12px;color:#000;transform:scaleX(1.0110);transform-origin:100% 50%;">0,0000</span>
<span class="t" style="left:1140.64px;top:537.42px;font-size:12px;color:#000;transform:scaleX(1.0102);transform-origin:100% 50%;">0,00</span>
<span class="t" style="left:1231.31px;top:537.42px;font-size:12px;color:#000;transform:scaleX(1.0046);transform-origin:100% 50%;">54 450,00</span>
<span class="t" style="left:1369px;top:537.42px;font-size:12px;color:#000;transform:scaleX(1.0110);transform-origin:100% 50%;">0,0000</span>
<span class="t" style="left:1474.54px;top:537.42px;font-size:12px;color:#000;transform:scaleX(1.0102);transform-origin:100% 50%;">0,00</span>
<span class="t" style="left:1566.84px;top:537.42px;font-size:12px;color:#000;transform:scaleX(1.0102);transform-origin:100% 50%;">0,00</span>
<span class="t" style="left:1664.3px;top:537.42px;font-size:12px;color:#000;transform:scaleX(1.0110);transform-origin:100% 50%;">0,0000</span>
<span class="t" style="left:1766.14px;top:537.42px;font-size:12px;color:#000;transform:scaleX(0.9482);transform-origin:100% 50%;">TKW</span>
<span class="t" style="left:1861.54px;top:537.42px;font-size:12px;color:#000;transform:scaleX(1.0102);transform-origin:100% 50%;">0,00</span>
<span class="t" style="left:120px;top:556.59px;font-size:12px;color:#000;transform:scaleX(0.9561);transform-origin:0 50%;">SYMBOL 30473</span>
<span class="t" style="left:264px;top:556.59px;font-size:12px;color:#000;transform:scaleX(0.9402);transform-origin:0 50%;">INDEKS 30473</span>
<span class="t" style="left:595.8px;top:556.59px;font-size:12px;color:#000;transform:scaleX(0.8713);transform-origin:0 50%;">USLUGA</span>
<span class="t" style="left:763.61px;top:556.59px;font-size:12px;color:#000;transform:scaleX(1.0440);transform-origin:50% 50%;">m2</span>
<span class="t" style="left:868.31px;top:556.59px;font-size:12px;color:#000;transform:scaleX(1.0046);transform-origin:100% 50%;">54 450,00</span>
<span class="t" style="left:1005.8px;top:557.49px;font-size:12px;color:#000;transform:scaleX(1.0110);transform-origin:100% 50%;">0,0000</span>
<span class="t" style="left:1140.64px;top:556.59px;font-size:12px;color:#000;transform:scaleX(1.0102);transform-origin:100% 50%;">0,00</span>
<span class="t" style="left:1231.31px;top:556.59px;font-size:12px;color:#000;transform:scaleX(1.0046);transform-origin:100% 50%;">54 450,00</span>
<span class="t" style="left:1369px;top:556.59px;font-size:12px;color:#000;transform:scaleX(1.0110);transform-origin:100% 50%;">0,0000</span>
<span class="t" style="left:1474.54px;top:556.59px;font-size:12px;color:#000;transform:scaleX(1.0102);transform-origin:100% 50%;">0,00</span>
<span class="t" style="left:1566.84px;top:556.59px;font-size:12px;color:#000;transform:scaleX(1.0102);transform-origin:100% 50%;">0,00</span>
<span class="t" style="left:1664.3px;top:556.59px;font-size:12px;color:#000;transform:scaleX(1.0110);transform-origin:100% 50%;">0,0000</span>
<span class="t" style="left:1766.14px;top:556.59px;font-size:12px;color:#000;transform:scaleX(0.9482);transform-origin:100% 50%;">TKW</span>
<span class="t" style="left:1861.54px;top:556.59px;font-size:12px;color:#000;transform:scaleX(1.0102);transform-origin:100% 50%;">0,00</span>
<span class="t" style="left:120px;top:575.76px;font-size:12px;color:#000;transform:scaleX(0.9561);transform-origin:0 50%;">SYMBOL 30474</span>
<span class="t" style="left:264px;top:575.76px;font-size:12px;color:#000;transform:scaleX(0.9402);transform-origin:0 50%;">INDEKS 30474</span>
<span class="t" style="left:595.8px;top:575.76px;font-size:12px;color:#000;transform:scaleX(0.8713);transform-origin:0 50%;">USLUGA</span>
<span class="t" style="left:763.61px;top:575.76px;font-size:12px;color:#000;transform:scaleX(1.0440);transform-origin:50% 50%;">m2</span>
<span class="t" style="left:868.31px;top:575.76px;font-size:12px;color:#000;transform:scaleX(1.0046);transform-origin:100% 50%;">54 450,00</span>
<span class="t" style="left:1005.8px;top:576.66px;font-size:12px;color:#000;transform:scaleX(1.0110);transform-origin:100% 50%;">0,0000</span>
<span class="t" style="left:1140.64px;top:575.76px;font-size:12px;color:#000;transform:scaleX(1.0102);transform-origin:100% 50%;">0,00</span>
<span class="t" style="left:1231.31px;top:575.76px;font-size:12px;color:#000;transform:scaleX(1.0046);transform-origin:100% 50%;">54 450,00</span>
<span class="t" style="left:1369px;top:575.76px;font-size:12px;color:#000;transform:scaleX(1.0110);transform-origin:100% 50%;">0,0000</span>
<span class="t" style="left:1474.54px;top:575.76px;font-size:12px;color:#000;transform:scaleX(1.0102);transform-origin:100% 50%;">0,00</span>
<span class="t" style="left:1566.84px;top:575.76px;font-size:12px;color:#000;transform:scaleX(1.0102);transform-origin:100% 50%;">0,00</span>
<span class="t" style="left:1664.3px;top:575.76px;font-size:12px;color:#000;transform:scaleX(1.0110);transform-origin:100% 50%;">0,0000</span>
<span class="t" style="left:1766.14px;top:575.76px;font-size:12px;color:#000;transform:scaleX(0.9482);transform-origin:100% 50%;">TKW</span>
<span class="t" style="left:1861.54px;top:575.76px;font-size:12px;color:#000;transform:scaleX(1.0102);transform-origin:100% 50%;">0,00</span>
<span class="t" style="left:120px;top:594.93px;font-size:12px;color:#000;transform:scaleX(0.9561);transform-origin:0 50%;">SYMBOL 30475</span>
<span class="t" style="left:264px;top:594.93px;font-size:12px;color:#000;transform:scaleX(0.9402);transform-origin:0 50%;">INDEKS 30475</span>
<span class="t" style="left:595.8px;top:594.93px;font-size:12px;color:#000;transform:scaleX(0.8713);transform-origin:0 50%;">USLUGA</span>
<span class="t" style="left:763.61px;top:594.93px;font-size:12px;color:#000;transform:scaleX(1.0440);transform-origin:50% 50%;">m2</span>
<span class="t" style="left:868.31px;top:594.93px;font-size:12px;color:#000;transform:scaleX(1.0046);transform-origin:100% 50%;">54 450,00</span>
<span class="t" style="left:1005.8px;top:595.83px;font-size:12px;color:#000;transform:scaleX(1.0110);transform-origin:100% 50%;">0,0000</span>
<span class="t" style="left:1140.64px;top:594.93px;font-size:12px;color:#000;transform:scaleX(1.0102);transform-origin:100% 50%;">0,00</span>
<span class="t" style="left:1231.31px;top:594.93px;font-size:12px;color:#000;transform:scaleX(1.0046);transform-origin:100% 50%;">54 450,00</span>
<span class="t" style="left:1369px;top:594.93px;font-size:12px;color:#000;transform:scaleX(1.0110);transform-origin:100% 50%;">0,0000</span>
<span class="t" style="left:1474.54px;top:594.93px;font-size:12px;color:#000;transform:scaleX(1.0102);transform-origin:100% 50%;">0,00</span>
<span class="t" style="left:1566.84px;top:594.93px;font-size:12px;color:#000;transform:scaleX(1.0102);transform-origin:100% 50%;">0,00</span>
<span class="t" style="left:1664.3px;top:594.93px;font-size:12px;color:#000;transform:scaleX(1.0110);transform-origin:100% 50%;">0,0000</span>
<span class="t" style="left:1766.14px;top:594.93px;font-size:12px;color:#000;transform:scaleX(0.9482);transform-origin:100% 50%;">TKW</span>
<span class="t" style="left:1861.54px;top:594.93px;font-size:12px;color:#000;transform:scaleX(1.0102);transform-origin:100% 50%;">0,00</span>
<span class="t" style="left:120px;top:614.1px;font-size:12px;color:#000;transform:scaleX(0.9561);transform-origin:0 50%;">SYMBOL 30476</span>
<span class="t" style="left:264px;top:614.1px;font-size:12px;color:#000;transform:scaleX(0.9402);transform-origin:0 50%;">INDEKS 30476</span>
<span class="t" style="left:595.8px;top:614.1px;font-size:12px;color:#000;transform:scaleX(0.8713);transform-origin:0 50%;">USLUGA</span>
<span class="t" style="left:763.61px;top:614.1px;font-size:12px;color:#000;transform:scaleX(1.0440);transform-origin:50% 50%;">m2</span>
<span class="t" style="left:868.31px;top:614.1px;font-size:12px;color:#000;transform:scaleX(1.0046);transform-origin:100% 50%;">54 450,00</span>
<span class="t" style="left:1005.8px;top:615px;font-size:12px;color:#000;transform:scaleX(1.0110);transform-origin:100% 50%;">0,0000</span>
<span class="t" style="left:1140.64px;top:614.1px;font-size:12px;color:#000;transform:scaleX(1.0102);transform-origin:100% 50%;">0,00</span>
<span class="t" style="left:1231.31px;top:614.1px;font-size:12px;color:#000;transform:scaleX(1.0046);transform-origin:100% 50%;">54 450,00</span>
<span class="t" style="left:1369px;top:614.1px;font-size:12px;color:#000;transform:scaleX(1.0110);transform-origin:100% 50%;">0,0000</span>
<span class="t" style="left:1474.54px;top:614.1px;font-size:12px;color:#000;transform:scaleX(1.0102);transform-origin:100% 50%;">0,00</span>
<span class="t" style="left:1566.84px;top:614.1px;font-size:12px;color:#000;transform:scaleX(1.0102);transform-origin:100% 50%;">0,00</span>
<span class="t" style="left:1664.3px;top:614.1px;font-size:12px;color:#000;transform:scaleX(1.0110);transform-origin:100% 50%;">0,0000</span>
<span class="t" style="left:1766.14px;top:614.1px;font-size:12px;color:#000;transform:scaleX(0.9482);transform-origin:100% 50%;">TKW</span>
<span class="t" style="left:1861.54px;top:614.1px;font-size:12px;color:#000;transform:scaleX(1.0102);transform-origin:100% 50%;">0,00</span>
<span class="t" style="left:120px;top:633.27px;font-size:12px;color:#000;transform:scaleX(0.9561);transform-origin:0 50%;">SYMBOL 30477</span>
<span class="t" style="left:264px;top:633.27px;font-size:12px;color:#000;transform:scaleX(0.9402);transform-origin:0 50%;">INDEKS 30477</span>
<span class="t" style="left:595.8px;top:633.27px;font-size:12px;color:#000;transform:scaleX(0.8713);transform-origin:0 50%;">USLUGA</span>
<span class="t" style="left:763.61px;top:633.27px;font-size:12px;color:#000;transform:scaleX(1.0440);transform-origin:50% 50%;">m2</span>
<span class="t" style="left:868.31px;top:633.27px;font-size:12px;color:#000;transform:scaleX(1.0046);transform-origin:100% 50%;">54 450,00</span>
<span class="t" style="left:1005.8px;top:634.17px;font-size:12px;color:#000;transform:scaleX(1.0110);transform-origin:100% 50%;">0,0000</span>
<span class="t" style="left:1140.64px;top:633.27px;font-size:12px;color:#000;transform:scaleX(1.0102);transform-origin:100% 50%;">0,00</span>
<span class="t" style="left:1231.31px;top:633.27px;font-size:12px;color:#000;transform:scaleX(1.0046);transform-origin:100% 50%;">54 450,00</span>
<span class="t" style="left:1369px;top:633.27px;font-size:12px;color:#000;transform:scaleX(1.0110);transform-origin:100% 50%;">0,0000</span>
<span class="t" style="left:1474.54px;top:633.27px;font-size:12px;color:#000;transform:scaleX(1.0102);transform-origin:100% 50%;">0,00</span>
<span class="t" style="left:1566.84px;top:633.27px;font-size:12px;color:#000;transform:scaleX(1.0102);transform-origin:100% 50%;">0,00</span>
<span class="t" style="left:1664.3px;top:633.27px;font-size:12px;color:#000;transform:scaleX(1.0110);transform-origin:100% 50%;">0,0000</span>
<span class="t" style="left:1766.14px;top:633.27px;font-size:12px;color:#000;transform:scaleX(0.9482);transform-origin:100% 50%;">TKW</span>
<span class="t" style="left:1861.54px;top:633.27px;font-size:12px;color:#000;transform:scaleX(1.0102);transform-origin:100% 50%;">0,00</span>
<span class="t" style="left:120px;top:652.44px;font-size:12px;color:#fff;font-weight:700;transform:scaleX(0.9743);transform-origin:0 50%;">SYMBOL 16608</span>
<span class="t" style="left:264px;top:652.44px;font-size:12px;color:#fff;font-weight:700;transform:scaleX(0.9677);transform-origin:0 50%;">INDEKS 16608</span>
<span class="t" style="left:763.28px;top:652.44px;font-size:12px;color:#fff;font-weight:700;transform:scaleX(1.0112);transform-origin:50% 50%;">m2</span>
<span class="t" style="left:868.31px;top:652.44px;font-size:12px;color:#fff;font-weight:700;transform:scaleX(1.0529);transform-origin:100% 50%;">49 450,00</span>
<span class="t" style="left:1005.8px;top:653.34px;font-size:12px;color:#fff;font-weight:700;transform:scaleX(1.0620);transform-origin:100% 50%;">2,2620</span>
<span class="t" style="left:1105.26px;top:652.44px;font-size:12px;color:#fff;font-weight:700;transform:scaleX(1.0780);transform-origin:100% 50%;">111 857,37</span>
<span class="t" style="left:1369px;top:652.44px;font-size:12px;color:#fff;font-weight:700;transform:scaleX(1.0620);transform-origin:100% 50%;">2,0687</span>
<span class="t" style="left:1437.84px;top:652.44px;font-size:12px;color:#fff;font-weight:700;transform:scaleX(1.0542);transform-origin:100% 50%;">102 297,95</span>
<span class="t" style="left:1543.49px;top:652.44px;font-size:12px;color:#fff;font-weight:700;transform:scaleX(1.0512);transform-origin:100% 50%;">9 559,42</span>
<span class="t" style="left:1664.3px;top:652.44px;font-size:12px;color:#fff;font-weight:700;transform:scaleX(1.0620);transform-origin:100% 50%;">2,1549</span>
<span class="t" style="left:1824.84px;top:652.44px;font-size:12px;color:#fff;font-weight:700;transform:scaleX(1.0542);transform-origin:100% 50%;">106 560,33</span>
<span class="t" style="left:120px;top:671.61px;font-size:12px;color:#000;font-weight:700;transform:scaleX(1.1375);transform-origin:0 50%;">63/02/2023</span>
<span class="t" style="left:763.28px;top:671.61px;font-size:12px;color:#000;font-weight:700;transform:scaleX(1.0112);transform-origin:50% 50%;">m2</span>
<span class="t" style="left:868.31px;top:671.61px;font-size:12px;color:#000;font-weight:700;transform:scaleX(1.0529);transform-origin:100% 50%;">49 450,00</span>
<span class="t" style="left:1005.8px;top:672.51px;font-size:12px;color:#000;font-weight:700;transform:scaleX(1.0620);transform-origin:100% 50%;">2,2620</span>
<span class="t" style="left:1105.26px;top:671.61px;font-size:12px;color:#000;font-weight:700;transform:scaleX(1.0780);transform-origin:100% 50%;">111 857,37</span>
<span class="t" style="left:1369px;top:671.61px;font-size:12px;color:#000;font-weight:700;transform:scaleX(1.0620);transform-origin:100% 50%;">2,0687</span>
<span class="t" style="left:1437.84px;top:671.61px;font-size:12px;color:#000;font-weight:700;transform:scaleX(1.0542);transform-origin:100% 50%;">102 297,95</span>
<span class="t" style="left:1543.49px;top:671.61px;font-size:12px;color:#000;font-weight:700;transform:scaleX(1.0512);transform-origin:100% 50%;">9 559,42</span>
<span class="t" style="left:1664.3px;top:671.61px;font-size:12px;color:#000;font-weight:700;transform:scaleX(1.0620);transform-origin:100% 50%;">2,1549</span>
<span class="t" style="left:1824.84px;top:671.61px;font-size:12px;color:#000;font-weight:700;transform:scaleX(1.0542);transform-origin:100% 50%;">106 560,33</span>
<span class="t" style="left:120px;top:690.78px;font-size:12px;color:#000;transform:scaleX(0.9661);transform-origin:0 50%;">SYMBOL 11616</span>
<span class="t" style="left:264px;top:690.78px;font-size:12px;color:#000;transform:scaleX(0.9506);transform-origin:0 50%;">INDEKS 11616</span>
<span class="t" style="left:595.8px;top:690.78px;font-size:12px;color:#000;transform:scaleX(0.9184);transform-origin:0 50%;">MATERIAL</span>
<span class="t" style="left:764.28px;top:690.78px;font-size:12px;color:#000;transform:scaleX(0.9746);transform-origin:50% 50%;">szt</span>
<span class="t" style="left:891.67px;top:690.78px;font-size:12px;color:#000;transform:scaleX(1.0107);transform-origin:100% 50%;">29,97</span>
<span class="t" style="left:999.12px;top:691.68px;font-size:12px;color:#000;transform:scaleX(1.0112);transform-origin:100% 50%;">28,5352</span>
<span class="t" style="left:1127.3px;top:690.78px;font-size:12px;color:#000;transform:scaleX(1.0110);transform-origin:100% 50%;">855,20</span>
<span class="t" style="left:1254.67px;top:690.78px;font-size:12px;color:#000;transform:scaleX(1.0107);transform-origin:100% 50%;">29,97</span>
<span class="t" style="left:1362.32px;top:690.78px;font-size:12px;color:#000;transform:scaleX(1.0112);transform-origin:100% 50%;">29,0000</span>
<span class="t" style="left:1461.2px;top:690.78px;font-size:12px;color:#000;transform:scaleX(1.0110);transform-origin:100% 50%;">869,12</span>
<span class="t" style="left:1556.17px;top:690.78px;font-size:12px;color:#000;transform:scaleX(1.0119);transform-origin:100% 50%;">-13,92</span>
<span class="t" style="left:1657.62px;top:690.78px;font-size:12px;color:#000;transform:scaleX(1.0112);transform-origin:100% 50%;">29,0000</span>
<span class="t" style="left:1766.14px;top:690.78px;font-size:12px;color:#000;transform:scaleX(0.9482);transform-origin:100% 50%;">TKW</span>
<span class="t" style="left:1848.2px;top:690.78px;font-size:12px;color:#000;transform:scaleX(1.0110);transform-origin:100% 50%;">869,13</span>
<span class="t" style="left:120px;top:709.95px;font-size:12px;color:#000;transform:scaleX(0.9561);transform-origin:0 50%;">SYMBOL 13543</span>
<span class="t" style="left:264px;top:709.95px;font-size:12px;color:#000;transform:scaleX(0.9402);transform-origin:0 50%;">INDEKS 13543</span>
<span class="t" style="left:595.8px;top:709.95px;font-size:12px;color:#000;transform:scaleX(0.9184);transform-origin:0 50%;">MATERIAL</span>
<span class="t" style="left:765.61px;top:709.95px;font-size:12px;color:#000;transform:scaleX(0.9732);transform-origin:50% 50%;">kg</span>
<span class="t" style="left:1254.67px;top:709.95px;font-size:12px;color:#000;transform:scaleX(1.0107);transform-origin:100% 50%;">49,45</span>
<span class="t" style="left:1362.32px;top:709.95px;font-size:12px;color:#000;transform:scaleX(1.0112);transform-origin:100% 50%;">26,9000</span>
<span class="t" style="left:1451.19px;top:709.95px;font-size:12px;color:#000;">1 330,21</span>
<span class="t" style="left:1539.49px;top:709.95px;font-size:12px;color:#000;transform:scaleX(1.0049);transform-origin:100% 50%;">-1 330,21</span>
<span class="t" style="left:120px;top:729.12px;font-size:12px;color:#000;transform:scaleX(0.9561);transform-origin:0 50%;">SYMBOL 13575</span>
<span class="t" style="left:264px;top:729.12px;font-size:12px;color:#000;transform:scaleX(0.9402);transform-origin:0 50%;">INDEKS 13575</span>
<span class="t" style="left:595.8px;top:729.12px;font-size:12px;color:#000;transform:scaleX(0.9184);transform-origin:0 50%;">MATERIAL</span>
<span class="t" style="left:764.28px;top:729.12px;font-size:12px;color:#000;transform:scaleX(0.9746);transform-origin:50% 50%;">szt</span>
<span class="t" style="left:891.67px;top:729.12px;font-size:12px;color:#000;transform:scaleX(1.0107);transform-origin:100% 50%;">29,97</span>
<span class="t" style="left:999.12px;top:730.02px;font-size:12px;color:#000;transform:scaleX(1.0112);transform-origin:100% 50%;">31,2903</span>
<span class="t" style="left:1127.3px;top:729.12px;font-size:12px;color:#000;transform:scaleX(1.0110);transform-origin:100% 50%;">937,77</span>
<span class="t" style="left:1254.67px;top:729.12px;font-size:12px;color:#000;transform:scaleX(1.0107);transform-origin:100% 50%;">29,97</span>
<span class="t" style="left:1362.32px;top:729.12px;font-size:12px;color:#000;transform:scaleX(1.0112);transform-origin:100% 50%;">31,2900</span>
<span class="t" style="left:1461.2px;top:729.12px;font-size:12px;color:#000;transform:scaleX(1.0110);transform-origin:100% 50%;">937,75</span>
<span class="t" style="left:1566.84px;top:729.12px;font-size:12px;color:#000;transform:scaleX(1.0102);transform-origin:100% 50%;">0,02</span>
<span class="t" style="left:1657.62px;top:729.12px;font-size:12px;color:#000;transform:scaleX(1.0112);transform-origin:100% 50%;">31,2900</span>
<span class="t" style="left:1766.14px;top:729.12px;font-size:12px;color:#000;transform:scaleX(0.9482);transform-origin:100% 50%;">TKW</span>
<span class="t" style="left:1848.2px;top:729.12px;font-size:12px;color:#000;transform:scaleX(1.0110);transform-origin:100% 50%;">937,76</span>
<span class="t" style="left:120px;top:748.29px;font-size:12px;color:#000;transform:scaleX(0.9661);transform-origin:0 50%;">SYMBOL 13711</span>
<span class="t" style="left:264px;top:748.29px;font-size:12px;color:#000;transform:scaleX(0.9506);transform-origin:0 50%;">INDEKS 13711</span>
<span class="t" style="left:595.8px;top:748.29px;font-size:12px;color:#000;transform:scaleX(0.9184);transform-origin:0 50%;">MATERIAL</span>
<span class="t" style="left:764.28px;top:748.29px;font-size:12px;color:#000;transform:scaleX(0.9746);transform-origin:50% 50%;">szt</span>
<span class="t" style="left:874.99px;top:748.29px;font-size:12px;color:#000;">1 018,67</span>
<span class="t" style="left:1005.8px;top:749.19px;font-size:12px;color:#000;transform:scaleX(1.0110);transform-origin:100% 50%;">0,9303</span>
<span class="t" style="left:1127.3px;top:748.29px;font-size:12px;color:#000;transform:scaleX(1.0110);transform-origin:100% 50%;">947,66</span>
<span class="t" style="left:1237.99px;top:748.29px;font-size:12px;color:#000;">1 018,67</span>
<span class="t" style="left:1369px;top:748.29px;font-size:12px;color:#000;transform:scaleX(1.0110);transform-origin:100% 50%;">0,9400</span>
<span class="t" style="left:1461.2px;top:748.29px;font-size:12px;color:#000;transform:scaleX(1.0110);transform-origin:100% 50%;">957,55</span>
<span class="t" style="left:1562.85px;top:748.29px;font-size:12px;color:#000;transform:scaleX(1.0118);transform-origin:100% 50%;">-9,89</span>
<span class="t" style="left:1664.3px;top:748.29px;font-size:12px;color:#000;transform:scaleX(1.0110);transform-origin:100% 50%;">0,9400</span>
<span class="t" style="left:1766.14px;top:748.29px;font-size:12px;color:#000;transform:scaleX(0.9482);transform-origin:100% 50%;">TKW</span>
<span class="t" style="left:1848.2px;top:748.29px;font-size:12px;color:#000;transform:scaleX(1.0110);transform-origin:100% 50%;">957,55</span>
<span class="t" style="left:120px;top:767.46px;font-size:12px;color:#000;transform:scaleX(0.9561);transform-origin:0 50%;">SYMBOL 20715</span>
<span class="t" style="left:264px;top:767.46px;font-size:12px;color:#000;transform:scaleX(0.9402);transform-origin:0 50%;">INDEKS 20715</span>
<span class="t" style="left:595.8px;top:767.46px;font-size:12px;color:#000;transform:scaleX(0.9184);transform-origin:0 50%;">MATERIAL</span>
<span class="t" style="left:764.28px;top:767.46px;font-size:12px;color:#000;transform:scaleX(0.9746);transform-origin:50% 50%;">szt</span>
<span class="t" style="left:885px;top:767.46px;font-size:12px;color:#000;transform:scaleX(1.0110);transform-origin:100% 50%;">542,97</span>
<span class="t" style="left:1005.8px;top:768.36px;font-size:12px;color:#000;transform:scaleX(1.0110);transform-origin:100% 50%;">0,2200</span>
<span class="t" style="left:1128.19px;top:767.46px;font-size:12px;color:#000;transform:scaleX(1.0361);transform-origin:100% 50%;">119,46</span>
<span class="t" style="left:1248px;top:767.46px;font-size:12px;color:#000;transform:scaleX(1.0110);transform-origin:100% 50%;">542,97</span>
<span class="t" style="left:1369px;top:767.46px;font-size:12px;color:#000;transform:scaleX(1.0110);transform-origin:100% 50%;">0,2200</span>
<span class="t" style="left:1462.09px;top:767.46px;font-size:12px;color:#000;transform:scaleX(1.0361);transform-origin:100% 50%;">119,47</span>
<span class="t" style="left:1562.85px;top:767.46px;font-size:12px;color:#000;transform:scaleX(1.0118);transform-origin:100% 50%;">-0,01</span>
<span class="t" style="left:1664.3px;top:767.46px;font-size:12px;color:#000;transform:scaleX(1.0110);transform-origin:100% 50%;">0,2200</span>
<span class="t" style="left:1766.14px;top:767.46px;font-size:12px;color:#000;transform:scaleX(0.9482);transform-origin:100% 50%;">TKW</span>
<span class="t" style="left:1849.09px;top:767.46px;font-size:12px;color:#000;transform:scaleX(1.0361);transform-origin:100% 50%;">119,47</span>
<span class="t" style="left:120px;top:786.63px;font-size:12px;color:#000;transform:scaleX(0.9561);transform-origin:0 50%;">SYMBOL 20715</span>
<span class="t" style="left:264px;top:786.63px;font-size:12px;color:#000;transform:scaleX(0.9402);transform-origin:0 50%;">INDEKS 20715</span>
<span class="t" style="left:595.8px;top:786.63px;font-size:12px;color:#000;transform:scaleX(0.9184);transform-origin:0 50%;">MATERIAL</span>
<span class="t" style="left:764.28px;top:786.63px;font-size:12px;color:#000;transform:scaleX(0.9746);transform-origin:50% 50%;">szt</span>
<span class="t" style="left:1248px;top:786.63px;font-size:12px;color:#000;transform:scaleX(1.0110);transform-origin:100% 50%;">476,00</span>
<span class="t" style="left:1369px;top:786.63px;font-size:12px;color:#000;transform:scaleX(1.0110);transform-origin:100% 50%;">0,2200</span>
<span class="t" style="left:1461.2px;top:786.63px;font-size:12px;color:#000;transform:scaleX(1.0110);transform-origin:100% 50%;">104,73</span>
<span class="t" style="left:1549.5px;top:786.63px;font-size:12px;color:#000;transform:scaleX(1.0120);transform-origin:100% 50%;">-104,73</span>
<span class="t" style="left:120px;top:805.8px;font-size:12px;color:#000;transform:scaleX(0.9561);transform-origin:0 50%;">SYMBOL 30341</span>
<span class="t" style="left:264px;top:805.8px;font-size:12px;color:#000;transform:scaleX(0.9402);transform-origin:0 50%;">INDEKS 30341</span>
<span class="t" style="left:595.8px;top:805.8px;font-size:12px;color:#000;transform:scaleX(0.9184);transform-origin:0 50%;">MATERIAL</span>
<span class="t" style="left:764.28px;top:805.8px;font-size:12px;color:#000;transform:scaleX(0.9746);transform-origin:50% 50%;">szt</span>
<span class="t" style="left:898.34px;top:805.8px;font-size:12px;color:#000;transform:scaleX(1.0102);transform-origin:100% 50%;">0,49</span>
<span class="t" style="left:992.45px;top:806.7px;font-size:12px;color:#000;transform:scaleX(1.0113);transform-origin:100% 50%;">137,7733</span>
<span class="t" style="left:1133.97px;top:805.8px;font-size:12px;color:#000;transform:scaleX(1.0107);transform-origin:100% 50%;">68,06</span>
<span class="t" style="left:1261.34px;top:805.8px;font-size:12px;color:#000;transform:scaleX(1.0102);transform-origin:100% 50%;">0,49</span>
<span class="t" style="left:1355.65px;top:805.8px;font-size:12px;color:#000;transform:scaleX(1.0113);transform-origin:100% 50%;">137,7800</span>
<span class="t" style="left:1467.87px;top:805.8px;font-size:12px;color:#000;transform:scaleX(1.0107);transform-origin:100% 50%;">68,13</span>
<span class="t" style="left:1562.85px;top:805.8px;font-size:12px;color:#000;transform:scaleX(1.0118);transform-origin:100% 50%;">-0,07</span>
<span class="t" style="left:1650.95px;top:805.8px;font-size:12px;color:#000;transform:scaleX(1.0113);transform-origin:100% 50%;">137,7800</span>
<span class="t" style="left:1766.14px;top:805.8px;font-size:12px;color:#000;transform:scaleX(0.9482);transform-origin:100% 50%;">TKW</span>
<span class="t" style="left:1854.87px;top:805.8px;font-size:12px;color:#000;transform:scaleX(1.0107);transform-origin:100% 50%;">68,06</span>
<span class="t" style="left:120px;top:824.97px;font-size:12px;color:#000;transform:scaleX(0.9561);transform-origin:0 50%;">SYMBOL 30456</span>
<span class="t" style="left:264px;top:824.97px;font-size:12px;color:#000;transform:scaleX(0.9402);transform-origin:0 50%;">INDEKS 30456</span>
<span class="t" style="left:595.8px;top:824.97px;font-size:12px;color:#000;transform:scaleX(0.9184);transform-origin:0 50%;">MATERIAL</span>
<span class="t" style="left:764.28px;top:824.97px;font-size:12px;color:#000;transform:scaleX(0.9746);transform-origin:50% 50%;">szt</span>
<span class="t" style="left:885px;top:824.97px;font-size:12px;color:#000;transform:scaleX(1.0110);transform-origin:100% 50%;">989,00</span>
<span class="t" style="left:1005.8px;top:825.87px;font-size:12px;color:#000;transform:scaleX(1.0110);transform-origin:100% 50%;">0,5000</span>
<span class="t" style="left:1127.3px;top:824.97px;font-size:12px;color:#000;transform:scaleX(1.0110);transform-origin:100% 50%;">494,50</span>
<span class="t" style="left:1248px;top:824.97px;font-size:12px;color:#000;transform:scaleX(1.0110);transform-origin:100% 50%;">989,00</span>
<span class="t" style="left:1369px;top:824.97px;font-size:12px;color:#000;transform:scaleX(1.0110);transform-origin:100% 50%;">0,5000</span>
<span class="t" style="left:1461.2px;top:824.97px;font-size:12px;color:#000;transform:scaleX(1.0110);transform-origin:100% 50%;">494,50</span>
<span class="t" style="left:1566.84px;top:824.97px;font-size:12px;color:#000;transform:scaleX(1.0102);transform-origin:100% 50%;">0,00</span>
<span class="t" style="left:1664.3px;top:824.97px;font-size:12px;color:#000;transform:scaleX(1.0110);transform-origin:100% 50%;">0,5000</span>
<span class="t" style="left:1766.14px;top:824.97px;font-size:12px;color:#000;transform:scaleX(0.9482);transform-origin:100% 50%;">TKW</span>
<span class="t" style="left:1848.2px;top:824.97px;font-size:12px;color:#000;transform:scaleX(1.0110);transform-origin:100% 50%;">494,50</span>
<span class="t" style="left:120px;top:844.14px;font-size:12px;color:#000;transform:scaleX(0.9561);transform-origin:0 50%;">SYMBOL 13579</span>
<span class="t" style="left:264px;top:844.14px;font-size:12px;color:#000;transform:scaleX(0.9402);transform-origin:0 50%;">INDEKS 13579</span>
<span class="t" style="left:595.8px;top:844.14px;font-size:12px;color:#000;transform:scaleX(0.8950);transform-origin:0 50%;">POLPRODUKT</span>
<span class="t" style="left:763.61px;top:844.14px;font-size:12px;color:#000;transform:scaleX(1.0589);transform-origin:50% 50%;">mb</span>
<span class="t" style="left:868.31px;top:844.14px;font-size:12px;color:#000;transform:scaleX(1.0046);transform-origin:100% 50%;">52 100,00</span>
<span class="t" style="left:1005.8px;top:845.04px;font-size:12px;color:#000;transform:scaleX(1.0110);transform-origin:100% 50%;">1,9792</span>
<span class="t" style="left:1104.83px;top:844.14px;font-size:12px;color:#000;transform:scaleX(1.0206);transform-origin:100% 50%;">103 113,88</span>
<span class="t" style="left:1231.31px;top:844.14px;font-size:12px;color:#000;transform:scaleX(1.0046);transform-origin:100% 50%;">49 450,00</span>
<span class="t" style="left:1369px;top:844.14px;font-size:12px;color:#000;transform:scaleX(1.0110);transform-origin:100% 50%;">1,9700</span>
<span class="t" style="left:1444.51px;top:844.14px;font-size:12px;color:#000;transform:scaleX(1.0046);transform-origin:100% 50%;">97 416,50</span>
<span class="t" style="left:1543.49px;top:844.14px;font-size:12px;color:#000;">5 697,38</span>
<span class="t" style="left:1664.3px;top:844.14px;font-size:12px;color:#000;transform:scaleX(1.0110);transform-origin:100% 50%;">1,9792</span>
<span class="t" style="left:1773.02px;top:844.14px;font-size:12px;color:#000;transform:scaleX(0.9657);transform-origin:100% 50%;">RW</span>
<span class="t" style="left:1825.73px;top:844.14px;font-size:12px;color:#000;transform:scaleX(1.0206);transform-origin:100% 50%;">103 113,87</span>
<span class="t" style="left:120px;top:863.31px;font-size:12px;color:#000;transform:scaleX(0.9561);transform-origin:0 50%;">SYMBOL 30470</span>
<span class="t" style="left:264px;top:863.31px;font-size:12px;color:#000;transform:scaleX(0.9402);transform-origin:0 50%;">INDEKS 30470</span>
<span class="t" style="left:595.8px;top:863.31px;font-size:12px;color:#000;transform:scaleX(0.8713);transform-origin:0 50%;">USLUGA</span>
<span class="t" style="left:763.61px;top:863.31px;font-size:12px;color:#000;transform:scaleX(1.0440);transform-origin:50% 50%;">m2</span>
<span class="t" style="left:868.31px;top:863.31px;font-size:12px;color:#000;transform:scaleX(1.0046);transform-origin:100% 50%;">49 450,00</span>
<span class="t" style="left:1005.8px;top:864.21px;font-size:12px;color:#000;transform:scaleX(1.0110);transform-origin:100% 50%;">0,0167</span>
<span class="t" style="left:1127.3px;top:863.31px;font-size:12px;color:#000;transform:scaleX(1.0110);transform-origin:100% 50%;">825,82</span>
<span class="t" style="left:1231.31px;top:863.31px;font-size:12px;color:#000;transform:scaleX(1.0046);transform-origin:100% 50%;">49 450,00</span>
<span class="t" style="left:1369px;top:863.31px;font-size:12px;color:#000;transform:scaleX(1.0110);transform-origin:100% 50%;">0,0000</span>
<span class="t" style="left:1474.54px;top:863.31px;font-size:12px;color:#000;transform:scaleX(1.0102);transform-origin:100% 50%;">0,00</span>
<span class="t" style="left:1553.5px;top:863.31px;font-size:12px;color:#000;transform:scaleX(1.0110);transform-origin:100% 50%;">825,82</span>
<span class="t" style="left:1664.3px;top:863.31px;font-size:12px;color:#000;transform:scaleX(1.0110);transform-origin:100% 50%;">0,0000</span>
<span class="t" style="left:1766.14px;top:863.31px;font-size:12px;color:#000;transform:scaleX(0.9482);transform-origin:100% 50%;">TKW</span>
<span class="t" style="left:1861.54px;top:863.31px;font-size:12px;color:#000;transform:scaleX(1.0102);transform-origin:100% 50%;">0,00</span>
<span class="t" style="left:120px;top:882.48px;font-size:12px;color:#000;transform:scaleX(0.9561);transform-origin:0 50%;">SYMBOL 30471</span>
<span class="t" style="left:264px;top:882.48px;font-size:12px;color:#000;transform:scaleX(0.9402);transform-origin:0 50%;">INDEKS 30471</span>
<span class="t" style="left:595.8px;top:882.48px;font-size:12px;color:#000;transform:scaleX(0.8713);transform-origin:0 50%;">USLUGA</span>
<span class="t" style="left:763.61px;top:882.48px;font-size:12px;color:#000;transform:scaleX(1.0440);transform-origin:50% 50%;">m2</span>
<span class="t" style="left:868.31px;top:882.48px;font-size:12px;color:#000;transform:scaleX(1.0046);transform-origin:100% 50%;">49 450,00</span>
<span class="t" style="left:1005.8px;top:883.38px;font-size:12px;color:#000;transform:scaleX(1.0110);transform-origin:100% 50%;">0,0150</span>
<span class="t" style="left:1127.3px;top:882.48px;font-size:12px;color:#000;transform:scaleX(1.0110);transform-origin:100% 50%;">741,75</span>
<span class="t" style="left:1231.31px;top:882.48px;font-size:12px;color:#000;transform:scaleX(1.0046);transform-origin:100% 50%;">49 450,00</span>
<span class="t" style="left:1369px;top:882.48px;font-size:12px;color:#000;transform:scaleX(1.0110);transform-origin:100% 50%;">0,0000</span>
<span class="t" style="left:1474.54px;top:882.48px;font-size:12px;color:#000;transform:scaleX(1.0102);transform-origin:100% 50%;">0,00</span>
<span class="t" style="left:1553.5px;top:882.48px;font-size:12px;color:#000;transform:scaleX(1.0110);transform-origin:100% 50%;">741,75</span>
<span class="t" style="left:1664.3px;top:882.48px;font-size:12px;color:#000;transform:scaleX(1.0110);transform-origin:100% 50%;">0,0000</span>
<span class="t" style="left:1766.14px;top:882.48px;font-size:12px;color:#000;transform:scaleX(0.9482);transform-origin:100% 50%;">TKW</span>
<span class="t" style="left:1861.54px;top:882.48px;font-size:12px;color:#000;transform:scaleX(1.0102);transform-origin:100% 50%;">0,00</span>
<span class="t" style="left:120px;top:901.65px;font-size:12px;color:#000;transform:scaleX(0.9561);transform-origin:0 50%;">SYMBOL 30473</span>
<span class="t" style="left:264px;top:901.65px;font-size:12px;color:#000;transform:scaleX(0.9402);transform-origin:0 50%;">INDEKS 30473</span>
<span class="t" style="left:595.8px;top:901.65px;font-size:12px;color:#000;transform:scaleX(0.8713);transform-origin:0 50%;">USLUGA</span>
<span class="t" style="left:763.61px;top:901.65px;font-size:12px;color:#000;transform:scaleX(1.0440);transform-origin:50% 50%;">m2</span>
<span class="t" style="left:868.31px;top:901.65px;font-size:12px;color:#000;transform:scaleX(1.0046);transform-origin:100% 50%;">49 450,00</span>
<span class="t" style="left:1005.8px;top:902.55px;font-size:12px;color:#000;transform:scaleX(1.0110);transform-origin:100% 50%;">0,0019</span>
<span class="t" style="left:1133.97px;top:901.65px;font-size:12px;color:#000;transform:scaleX(1.0107);transform-origin:100% 50%;">93,96</span>
<span class="t" style="left:1231.31px;top:901.65px;font-size:12px;color:#000;transform:scaleX(1.0046);transform-origin:100% 50%;">49 450,00</span>
<span class="t" style="left:1369px;top:901.65px;font-size:12px;color:#000;transform:scaleX(1.0110);transform-origin:100% 50%;">0,0000</span>
<span class="t" style="left:1474.54px;top:901.65px;font-size:12px;color:#000;transform:scaleX(1.0102);transform-origin:100% 50%;">0,00</span>
<span class="t" style="left:1560.17px;top:901.65px;font-size:12px;color:#000;transform:scaleX(1.0107);transform-origin:100% 50%;">93,96</span>
<span class="t" style="left:1664.3px;top:901.65px;font-size:12px;color:#000;transform:scaleX(1.0110);transform-origin:100% 50%;">0,0000</span>
<span class="t" style="left:1766.14px;top:901.65px;font-size:12px;color:#000;transform:scaleX(0.9482);transform-origin:100% 50%;">TKW</span>
<span class="t" style="left:1861.54px;top:901.65px;font-size:12px;color:#000;transform:scaleX(1.0102);transform-origin:100% 50%;">0,00</span>
<span class="t" style="left:120px;top:920.82px;font-size:12px;color:#000;transform:scaleX(0.9561);transform-origin:0 50%;">SYMBOL 30474</span>
<span class="t" style="left:264px;top:920.82px;font-size:12px;color:#000;transform:scaleX(0.9402);transform-origin:0 50%;">INDEKS 30474</span>
<span class="t" style="left:595.8px;top:920.82px;font-size:12px;color:#000;transform:scaleX(0.8713);transform-origin:0 50%;">USLUGA</span>
<span class="t" style="left:763.61px;top:920.82px;font-size:12px;color:#000;transform:scaleX(1.0440);transform-origin:50% 50%;">m2</span>
<span class="t" style="left:868.31px;top:920.82px;font-size:12px;color:#000;transform:scaleX(1.0046);transform-origin:100% 50%;">49 450,00</span>
<span class="t" style="left:1005.8px;top:921.72px;font-size:12px;color:#000;transform:scaleX(1.0110);transform-origin:100% 50%;">0,0089</span>
<span class="t" style="left:1128.19px;top:920.82px;font-size:12px;color:#000;transform:scaleX(1.0361);transform-origin:100% 50%;">440,11</span>
<span class="t" style="left:1231.31px;top:920.82px;font-size:12px;color:#000;transform:scaleX(1.0046);transform-origin:100% 50%;">49 450,00</span>
<span class="t" style="left:1369px;top:920.82px;font-size:12px;color:#000;transform:scaleX(1.0110);transform-origin:100% 50%;">0,0000</span>
<span class="t" style="left:1474.54px;top:920.82px;font-size:12px;color:#000;transform:scaleX(1.0102);transform-origin:100% 50%;">0,00</span>
<span class="t" style="left:1554.39px;top:920.82px;font-size:12px;color:#000;transform:scaleX(1.0361);transform-origin:100% 50%;">440,11</span>
<span class="t" style="left:1664.3px;top:920.82px;font-size:12px;color:#000;transform:scaleX(1.0110);transform-origin:100% 50%;">0,0000</span>
<span class="t" style="left:1766.14px;top:920.82px;font-size:12px;color:#000;transform:scaleX(0.9482);transform-origin:100% 50%;">TKW</span>
<span class="t" style="left:1861.54px;top:920.82px;font-size:12px;color:#000;transform:scaleX(1.0102);transform-origin:100% 50%;">0,00</span>
<span class="t" style="left:120px;top:939.99px;font-size:12px;color:#000;transform:scaleX(0.9561);transform-origin:0 50%;">SYMBOL 30475</span>
<span class="t" style="left:264px;top:939.99px;font-size:12px;color:#000;transform:scaleX(0.9402);transform-origin:0 50%;">INDEKS 30475</span>
<span class="t" style="left:595.8px;top:939.99px;font-size:12px;color:#000;transform:scaleX(0.8713);transform-origin:0 50%;">USLUGA</span>
<span class="t" style="left:763.61px;top:939.99px;font-size:12px;color:#000;transform:scaleX(1.0440);transform-origin:50% 50%;">m2</span>
<span class="t" style="left:868.31px;top:939.99px;font-size:12px;color:#000;transform:scaleX(1.0046);transform-origin:100% 50%;">49 450,00</span>
<span class="t" style="left:1005.8px;top:940.89px;font-size:12px;color:#000;transform:scaleX(1.0110);transform-origin:100% 50%;">0,0066</span>
<span class="t" style="left:1127.3px;top:939.99px;font-size:12px;color:#000;transform:scaleX(1.0110);transform-origin:100% 50%;">326,37</span>
<span class="t" style="left:1231.31px;top:939.99px;font-size:12px;color:#000;transform:scaleX(1.0046);transform-origin:100% 50%;">49 450,00</span>
<span class="t" style="left:1369px;top:939.99px;font-size:12px;color:#000;transform:scaleX(1.0110);transform-origin:100% 50%;">0,0000</span>
<span class="t" style="left:1474.54px;top:939.99px;font-size:12px;color:#000;transform:scaleX(1.0102);transform-origin:100% 50%;">0,00</span>
<span class="t" style="left:1553.5px;top:939.99px;font-size:12px;color:#000;transform:scaleX(1.0110);transform-origin:100% 50%;">326,37</span>
<span class="t" style="left:1664.3px;top:939.99px;font-size:12px;color:#000;transform:scaleX(1.0110);transform-origin:100% 50%;">0,0000</span>
<span class="t" style="left:1766.14px;top:939.99px;font-size:12px;color:#000;transform:scaleX(0.9482);transform-origin:100% 50%;">TKW</span>
<span class="t" style="left:1861.54px;top:939.99px;font-size:12px;color:#000;transform:scaleX(1.0102);transform-origin:100% 50%;">0,00</span>
<span class="t" style="left:120px;top:959.16px;font-size:12px;color:#000;transform:scaleX(0.9561);transform-origin:0 50%;">SYMBOL 30476</span>
<span class="t" style="left:264px;top:959.16px;font-size:12px;color:#000;transform:scaleX(0.9402);transform-origin:0 50%;">INDEKS 30476</span>
<span class="t" style="left:595.8px;top:959.16px;font-size:12px;color:#000;transform:scaleX(0.8713);transform-origin:0 50%;">USLUGA</span>
<span class="t" style="left:763.61px;top:959.16px;font-size:12px;color:#000;transform:scaleX(1.0440);transform-origin:50% 50%;">m2</span>
<span class="t" style="left:868.31px;top:959.16px;font-size:12px;color:#000;transform:scaleX(1.0046);transform-origin:100% 50%;">49 450,00</span>
<span class="t" style="left:1005.8px;top:960.06px;font-size:12px;color:#000;transform:scaleX(1.0110);transform-origin:100% 50%;">0,0121</span>
<span class="t" style="left:1127.3px;top:959.16px;font-size:12px;color:#000;transform:scaleX(1.0110);transform-origin:100% 50%;">598,35</span>
<span class="t" style="left:1231.31px;top:959.16px;font-size:12px;color:#000;transform:scaleX(1.0046);transform-origin:100% 50%;">49 450,00</span>
<span class="t" style="left:1369px;top:959.16px;font-size:12px;color:#000;transform:scaleX(1.0110);transform-origin:100% 50%;">0,0000</span>
<span class="t" style="left:1474.54px;top:959.16px;font-size:12px;color:#000;transform:scaleX(1.0102);transform-origin:100% 50%;">0,00</span>
<span class="t" style="left:1553.5px;top:959.16px;font-size:12px;color:#000;transform:scaleX(1.0110);transform-origin:100% 50%;">598,35</span>
<span class="t" style="left:1664.3px;top:959.16px;font-size:12px;color:#000;transform:scaleX(1.0110);transform-origin:100% 50%;">0,0000</span>
<span class="t" style="left:1766.14px;top:959.16px;font-size:12px;color:#000;transform:scaleX(0.9482);transform-origin:100% 50%;">TKW</span>
<span class="t" style="left:1861.54px;top:959.16px;font-size:12px;color:#000;transform:scaleX(1.0102);transform-origin:100% 50%;">0,00</span>
<span class="t" style="left:120px;top:978.33px;font-size:12px;color:#000;transform:scaleX(0.9561);transform-origin:0 50%;">SYMBOL 30477</span>
<span class="t" style="left:264px;top:978.33px;font-size:12px;color:#000;transform:scaleX(0.9402);transform-origin:0 50%;">INDEKS 30477</span>
<span class="t" style="left:595.8px;top:978.33px;font-size:12px;color:#000;transform:scaleX(0.8713);transform-origin:0 50%;">USLUGA</span>
<span class="t" style="left:763.61px;top:978.33px;font-size:12px;color:#000;transform:scaleX(1.0440);transform-origin:50% 50%;">m2</span>
<span class="t" style="left:868.31px;top:978.33px;font-size:12px;color:#000;transform:scaleX(1.0046);transform-origin:100% 50%;">49 450,00</span>
<span class="t" style="left:1005.8px;top:979.23px;font-size:12px;color:#000;transform:scaleX(1.0110);transform-origin:100% 50%;">0,0464</span>
<span class="t" style="left:1117.29px;top:978.33px;font-size:12px;color:#000;">2 294,48</span>
<span class="t" style="left:1231.31px;top:978.33px;font-size:12px;color:#000;transform:scaleX(1.0046);transform-origin:100% 50%;">49 450,00</span>
<span class="t" style="left:1369px;top:978.33px;font-size:12px;color:#000;transform:scaleX(1.0110);transform-origin:100% 50%;">0,0000</span>
<span class="t" style="left:1474.54px;top:978.33px;font-size:12px;color:#000;transform:scaleX(1.0102);transform-origin:100% 50%;">0,00</span>
<span class="t" style="left:1543.49px;top:978.33px;font-size:12px;color:#000;">2 294,48</span>
<span class="t" style="left:1664.3px;top:978.33px;font-size:12px;color:#000;transform:scaleX(1.0110);transform-origin:100% 50%;">0,0000</span>
<span class="t" style="left:1766.14px;top:978.33px;font-size:12px;color:#000;transform:scaleX(0.9482);transform-origin:100% 50%;">TKW</span>
<span class="t" style="left:1861.54px;top:978.33px;font-size:12px;color:#000;transform:scaleX(1.0102);transform-origin:100% 50%;">0,00</span>
<span class="t" style="left:1908.6px;top:364.89px;font-size:12px;color:#000;font-weight:700;">6</span>
<span class="t" style="left:1908.6px;top:384.06px;font-size:12px;color:#000;">6</span>
<span class="t" style="left:1908.6px;top:403.23px;font-size:12px;color:#000;">6</span>
<span class="t" style="left:1908.6px;top:422.4px;font-size:12px;color:#000;">6</span>
<span class="t" style="left:1908.6px;top:441.57px;font-size:12px;color:#000;">6</span>
<span class="t" style="left:1908.6px;top:460.74px;font-size:12px;color:#000;">6</span>
<span class="t" style="left:1908.6px;top:479.91px;font-size:12px;color:#000;">6</span>
<span class="t" style="left:1908.6px;top:499.08px;font-size:12px;color:#000;">6</span>
<span class="t" style="left:1908.6px;top:518.25px;font-size:12px;color:#000;">6</span>
<span class="t" style="left:1908.6px;top:537.42px;font-size:12px;color:#000;">6</span>
<span class="t" style="left:1908.6px;top:556.59px;font-size:12px;color:#000;">6</span>
<span class="t" style="left:1908.6px;top:575.76px;font-size:12px;color:#000;">6</span>
<span class="t" style="left:1908.6px;top:594.93px;font-size:12px;color:#000;">6</span>
<span class="t" style="left:1908.6px;top:614.1px;font-size:12px;color:#000;">6</span>
<span class="t" style="left:1908.6px;top:633.27px;font-size:12px;color:#000;">6</span>
<span class="t" style="left:1908.6px;top:671.61px;font-size:12px;color:#000;font-weight:700;">6</span>
<span class="t" style="left:1908.6px;top:690.78px;font-size:12px;color:#000;">6</span>
<span class="t" style="left:1908.6px;top:709.95px;font-size:12px;color:#000;">6</span>
<span class="t" style="left:1908.6px;top:729.12px;font-size:12px;color:#000;">6</span>
<span class="t" style="left:1908.6px;top:748.29px;font-size:12px;color:#000;">6</span>
<span class="t" style="left:1908.6px;top:767.46px;font-size:12px;color:#000;">6</span>
<span class="t" style="left:1908.6px;top:786.63px;font-size:12px;color:#000;">6</span>
<span class="t" style="left:1908.6px;top:805.8px;font-size:12px;color:#000;">6</span>
<span class="t" style="left:1908.6px;top:824.97px;font-size:12px;color:#000;">6</span>
<span class="t" style="left:1908.6px;top:844.14px;font-size:12px;color:#000;">6</span>
<span class="t" style="left:1908.6px;top:863.31px;font-size:12px;color:#000;">6</span>
<span class="t" style="left:1908.6px;top:882.48px;font-size:12px;color:#000;">6</span>
<span class="t" style="left:1908.6px;top:901.65px;font-size:12px;color:#000;">6</span>
<span class="t" style="left:1908.6px;top:920.82px;font-size:12px;color:#000;">6</span>
<span class="t" style="left:1908.6px;top:939.99px;font-size:12px;color:#000;">6</span>
<span class="t" style="left:1908.6px;top:959.16px;font-size:12px;color:#000;">6</span>
<span class="t" style="left:1908.6px;top:978.33px;font-size:12px;color:#000;">6</span>
</div></div>
<div class="b" style="left:0px;top:360.4px;width:1912.2px;height:1.1px;background:#b9b9b9;"></div>
<div class="b" style="left:592.7px;top:252.5px;width:1px;height:731.1px;background:#9f9f9f;"></div>
<div class="b" style="left:116.4px;top:359.4px;width:146px;height:1.5px;background:#217346;"></div>
<div class="b" style="left:1911.7px;top:272px;width:1px;height:711.6px;background:#a6a6a6;"></div>
<div class="b" style="left:0px;top:983.4px;width:1913px;height:1.5px;background:#b0b0b0;"></div>
<div class="b" style="left:1916.2px;top:254.3px;width:18.7px;height:18.4px;background:#fff;border:1px solid #ababab;box-sizing:border-box;"></div>
<div class="b" style="left:1916.2px;top:273.8px;width:18.7px;height:20.8px;background:#fff;border:1px solid #ababab;box-sizing:border-box;"></div>
<div class="b" style="left:1916.2px;top:964px;width:18.7px;height:18.4px;background:#fff;border:1px solid #ababab;box-sizing:border-box;"></div>
<svg class="b" style="left:1916.6px;top:254.3px;" width="18.3" height="18.3" viewBox="0 0 18.3 18.3"><path d="M5 11.200l4.200-4.400 4.200 4.400z" fill="#222"/></svg>
<svg class="b" style="left:1916.6px;top:964px;" width="18.3" height="18.3" viewBox="0 0 18.3 18.3"><path d="M5 7.200l4.200 4.400 4.200-4.400z" fill="#222"/></svg>
<div class="b" style="left:0px;top:984.5px;width:1938px;height:28.6px;background:#e6e6e6;"></div>
<div class="b" style="left:1178.2px;top:988.4px;width:1733px;height:19px;background:#f0f0f0;"></div>
<svg class="b" style="left:0px;top:984px;" width="1938" height="30" viewBox="0 984 1938 30"><path d="M33.400 993.600v9.200l-6.200-4.600z" fill="#217346"/><path d="M57 993.600v9.200l6.200-4.600z" fill="#217346"/><rect x="83.2" y="999.200" width="1.900" height="1.900" fill="#217346"/><rect x="88.5" y="999.200" width="1.900" height="1.900" fill="#217346"/><rect x="93.8" y="999.200" width="1.900" height="1.900" fill="#217346"/><rect x="1096.4" y="999.200" width="1.900" height="1.900" fill="#217346"/><rect x="1101.6" y="999.200" width="1.900" height="1.900" fill="#217346"/><rect x="1106.8" y="999.200" width="1.900" height="1.900" fill="#217346"/><rect x="104.0" y="988" width="1" height="20.500" fill="#ababab"/><rect x="203.0" y="988" width="1" height="20.500" fill="#ababab"/><rect x="983.1" y="988" width="1" height="20.500" fill="#ababab"/><circle cx="1131.400" cy="998.300" r="9.600" fill="none" stroke="#8a8a8a" stroke-width="1.300"/><path d="M1126.400 998.300h10M1131.400 993.300v10" stroke="#666" stroke-width="1.500"/><rect x="1160" y="992.2" width="2.300" height="2.300" fill="#b0b0b0"/><rect x="1160" y="997.1" width="2.300" height="2.300" fill="#b0b0b0"/><rect x="1160" y="1002.0" width="2.300" height="2.300" fill="#b0b0b0"/><rect x="455.400" y="984.500" width="288.200" height="23.500" fill="#fff"/><rect x="455.400" y="1007.200" width="288.200" height="2.100" fill="#217346"/><rect x="455" y="984.500" width="1" height="23" fill="#c6c6c6"/><rect x="743.200" y="984.500" width="1" height="23" fill="#c6c6c6"/><rect x="1178.700" y="988.900" width="18.100" height="18.200" fill="#fff" stroke="#ababab" stroke-width="1"/><rect x="1196.800" y="988.900" width="103.900" height="18.200" fill="#fff" stroke="#ababab" stroke-width="1"/><rect x="1892.600" y="988.900" width="18.100" height="18.200" fill="#fff" stroke="#ababab" stroke-width="1"/><path d="M1190.600 993.800v8.800l-4.600-4.400z" fill="#222"/><path d="M1899.600 993.800v8.800l4.600-4.400z" fill="#222"/></svg>
<span class="t" style="left:117.6px;top:985.94px;font-size:17.2px;color:#5a5a5a;transform:scaleX(0.8993);transform-origin:0 50%;">DP_PLAN</span>
<span class="t" style="left:225.3px;top:985.94px;font-size:17.2px;color:#5a5a5a;transform:scaleX(0.9006);transform-origin:0 50%;">T.1.07.TKW_KALKULACJA_A</span>
<span class="t" style="left:467.7px;top:985.94px;font-size:17.2px;color:#217346;font-weight:700;transform:scaleX(0.9537);transform-origin:0 50%;">T.2.02.TKW_REALIZACJA_bezPW</span>
<span class="t" style="left:764.5px;top:985.94px;font-size:17.2px;color:#5a5a5a;transform:scaleX(0.9175);transform-origin:0 50%;">T.2.04.STAWKI_ACTvsTKW</span>
<div class="clip" style="left:995px;top:985px;width:93.600px;height:24px"><span class="t" style="left:3.7px;top:0.94px;font-size:17.2px;color:#5a5a5a;transform:scaleX(0.8827);transform-origin:0 50%;">RZIS_SALON</span></div>
<div class="b" style="left:0px;top:1012.2px;width:1938px;height:1px;background:#d0d0d0;"></div>
<div class="b" style="left:0px;top:1013.2px;width:1938px;height:26.8px;background:#f3f3f3;"></div>
<span class="t" style="left:15.3px;top:1019.99px;font-size:14.3px;color:#5a5a5a;transform:scaleX(0.9220);transform-origin:0 50%;">Gotowy</span>
<span class="t" style="left:165.8px;top:1019.99px;font-size:14.3px;color:#333;font-weight:700;transform:scaleX(0.9153);transform-origin:0 50%;">Ułatwienia dostępu: zbadaj</span>
<span class="t" style="left:1400px;top:1019.99px;font-size:14.3px;color:#444;transform:scaleX(0.8950);transform-origin:0 50%;">Ustawienia wyświetlania</span>
<div class="b" style="left:1562.7px;top:1013.2px;width:50.2px;height:26.8px;background:#c8c8c8;"></div>
<span class="t" style="left:1895.9px;top:1020.74px;font-size:13.3px;color:#5a5a5a;transform:scaleX(0.9016);transform-origin:0 50%;">80%</span>
<svg class="b" style="left:0px;top:1014px;" width="1938" height="26" viewBox="0 1014 1938 26"><circle cx="107.200" cy="1021.800" r="2.900" fill="#6a6a6a"/><rect x="111.800" y="1019.800" width="7.200" height="2.600" fill="#6a6a6a"/><rect x="104.800" y="1025.200" width="14.200" height="8.400" fill="#fff" stroke="#6a6a6a" stroke-width="1.100"/><path d="M104.800 1028h14.200M104.800 1030.800h14.200M108.400 1025.200v8.400M112 1025.200v8.400M115.500 1025.200v8.400" stroke="#6a6a6a" stroke-width="0.800" fill="none"/><path d="M151.200 1020.200a6.600 6.600 0 1 0 3.800 11.800" fill="none" stroke="#555" stroke-width="1.300" stroke-dasharray="3.200 1.800"/><path d="M151.200 1019v7.200h4.600" fill="none" stroke="#444" stroke-width="1.300"/><path d="M153.600 1027.400l8 7.400M161.600 1027.400l-8 7.400" stroke="#333" stroke-width="1.700"/><rect x="1379.200" y="1018.600" width="18.200" height="12.200" rx="1.200" fill="#4a4a4a"/><rect x="1382.600" y="1033.200" width="5.600" height="1.500" fill="#4a4a4a"/><circle cx="1393" cy="1031.800" r="5.200" fill="#f3f3f3"/><circle cx="1393" cy="1031.800" r="3.500" fill="none" stroke="#444" stroke-width="2.200" stroke-dasharray="1.700 1.050"/><circle cx="1393" cy="1031.800" r="2.400" fill="none" stroke="#444" stroke-width="1.500"/><g fill="none" stroke="#6a6a6a" stroke-width="1.200"><rect x="1580.400" y="1019.400" width="15.600" height="14.400"/><path d="M1580.400 1024.200h15.600M1580.400 1029h15.600M1585.600 1019.400v14.400M1590.800 1019.400v14.400"/></g><g fill="none" stroke="#6a6a6a" stroke-width="1.200"><rect x="1630.200" y="1019.400" width="16" height="14.400"/><rect x="1634" y="1022.600" width="8.400" height="8" stroke-width="1"/><path d="M1635.600 1025.200h5.200M1635.600 1027.800h5.200" stroke-width="0.900"/></g><g fill="none" stroke="#6a6a6a" stroke-width="1.200"><rect x="1679.900" y="1019.400" width="16.600" height="14.800"/><path d="M1684.800 1019.400v8.200M1690.200 1019.400v8.200M1679.900 1027.600h10.300"/></g><rect x="1720.900" y="1025.600" width="9.600" height="1.300" fill="#555"/><rect x="1737.200" y="1026.600" width="126.100" height="1.200" fill="#555"/><rect x="1784.700" y="1020" width="5.900" height="13.600" fill="#444"/><rect x="1799.800" y="1023.800" width="1.100" height="7.100" fill="#555"/><path d="M1869.200 1026.400h9.800M1874.100 1021.600v9.600" stroke="#555" stroke-width="1.300"/></svg>
<div class="b" style="left:0px;top:1039.7px;width:1938px;height:9.3px;background:#0b0b0b;"></div>
<div class="b" style="left:315px;top:1039.7px;width:61.5px;height:9.3px;background:#3c3c3c;"></div>
<div class="b" style="left:1932.2px;top:1040.5px;width:1px;height:8.5px;background:#666;"></div>
<div class="clip" style="left:1810px;top:1048px;width:40px;height:1px"><span class="t" style="left:3.4px;top:-0.41px;font-size:13px;color:#ddd;transform:scaleX(0.9222);transform-origin:0 50%;">12:20</span></div>
</div></body></html>
